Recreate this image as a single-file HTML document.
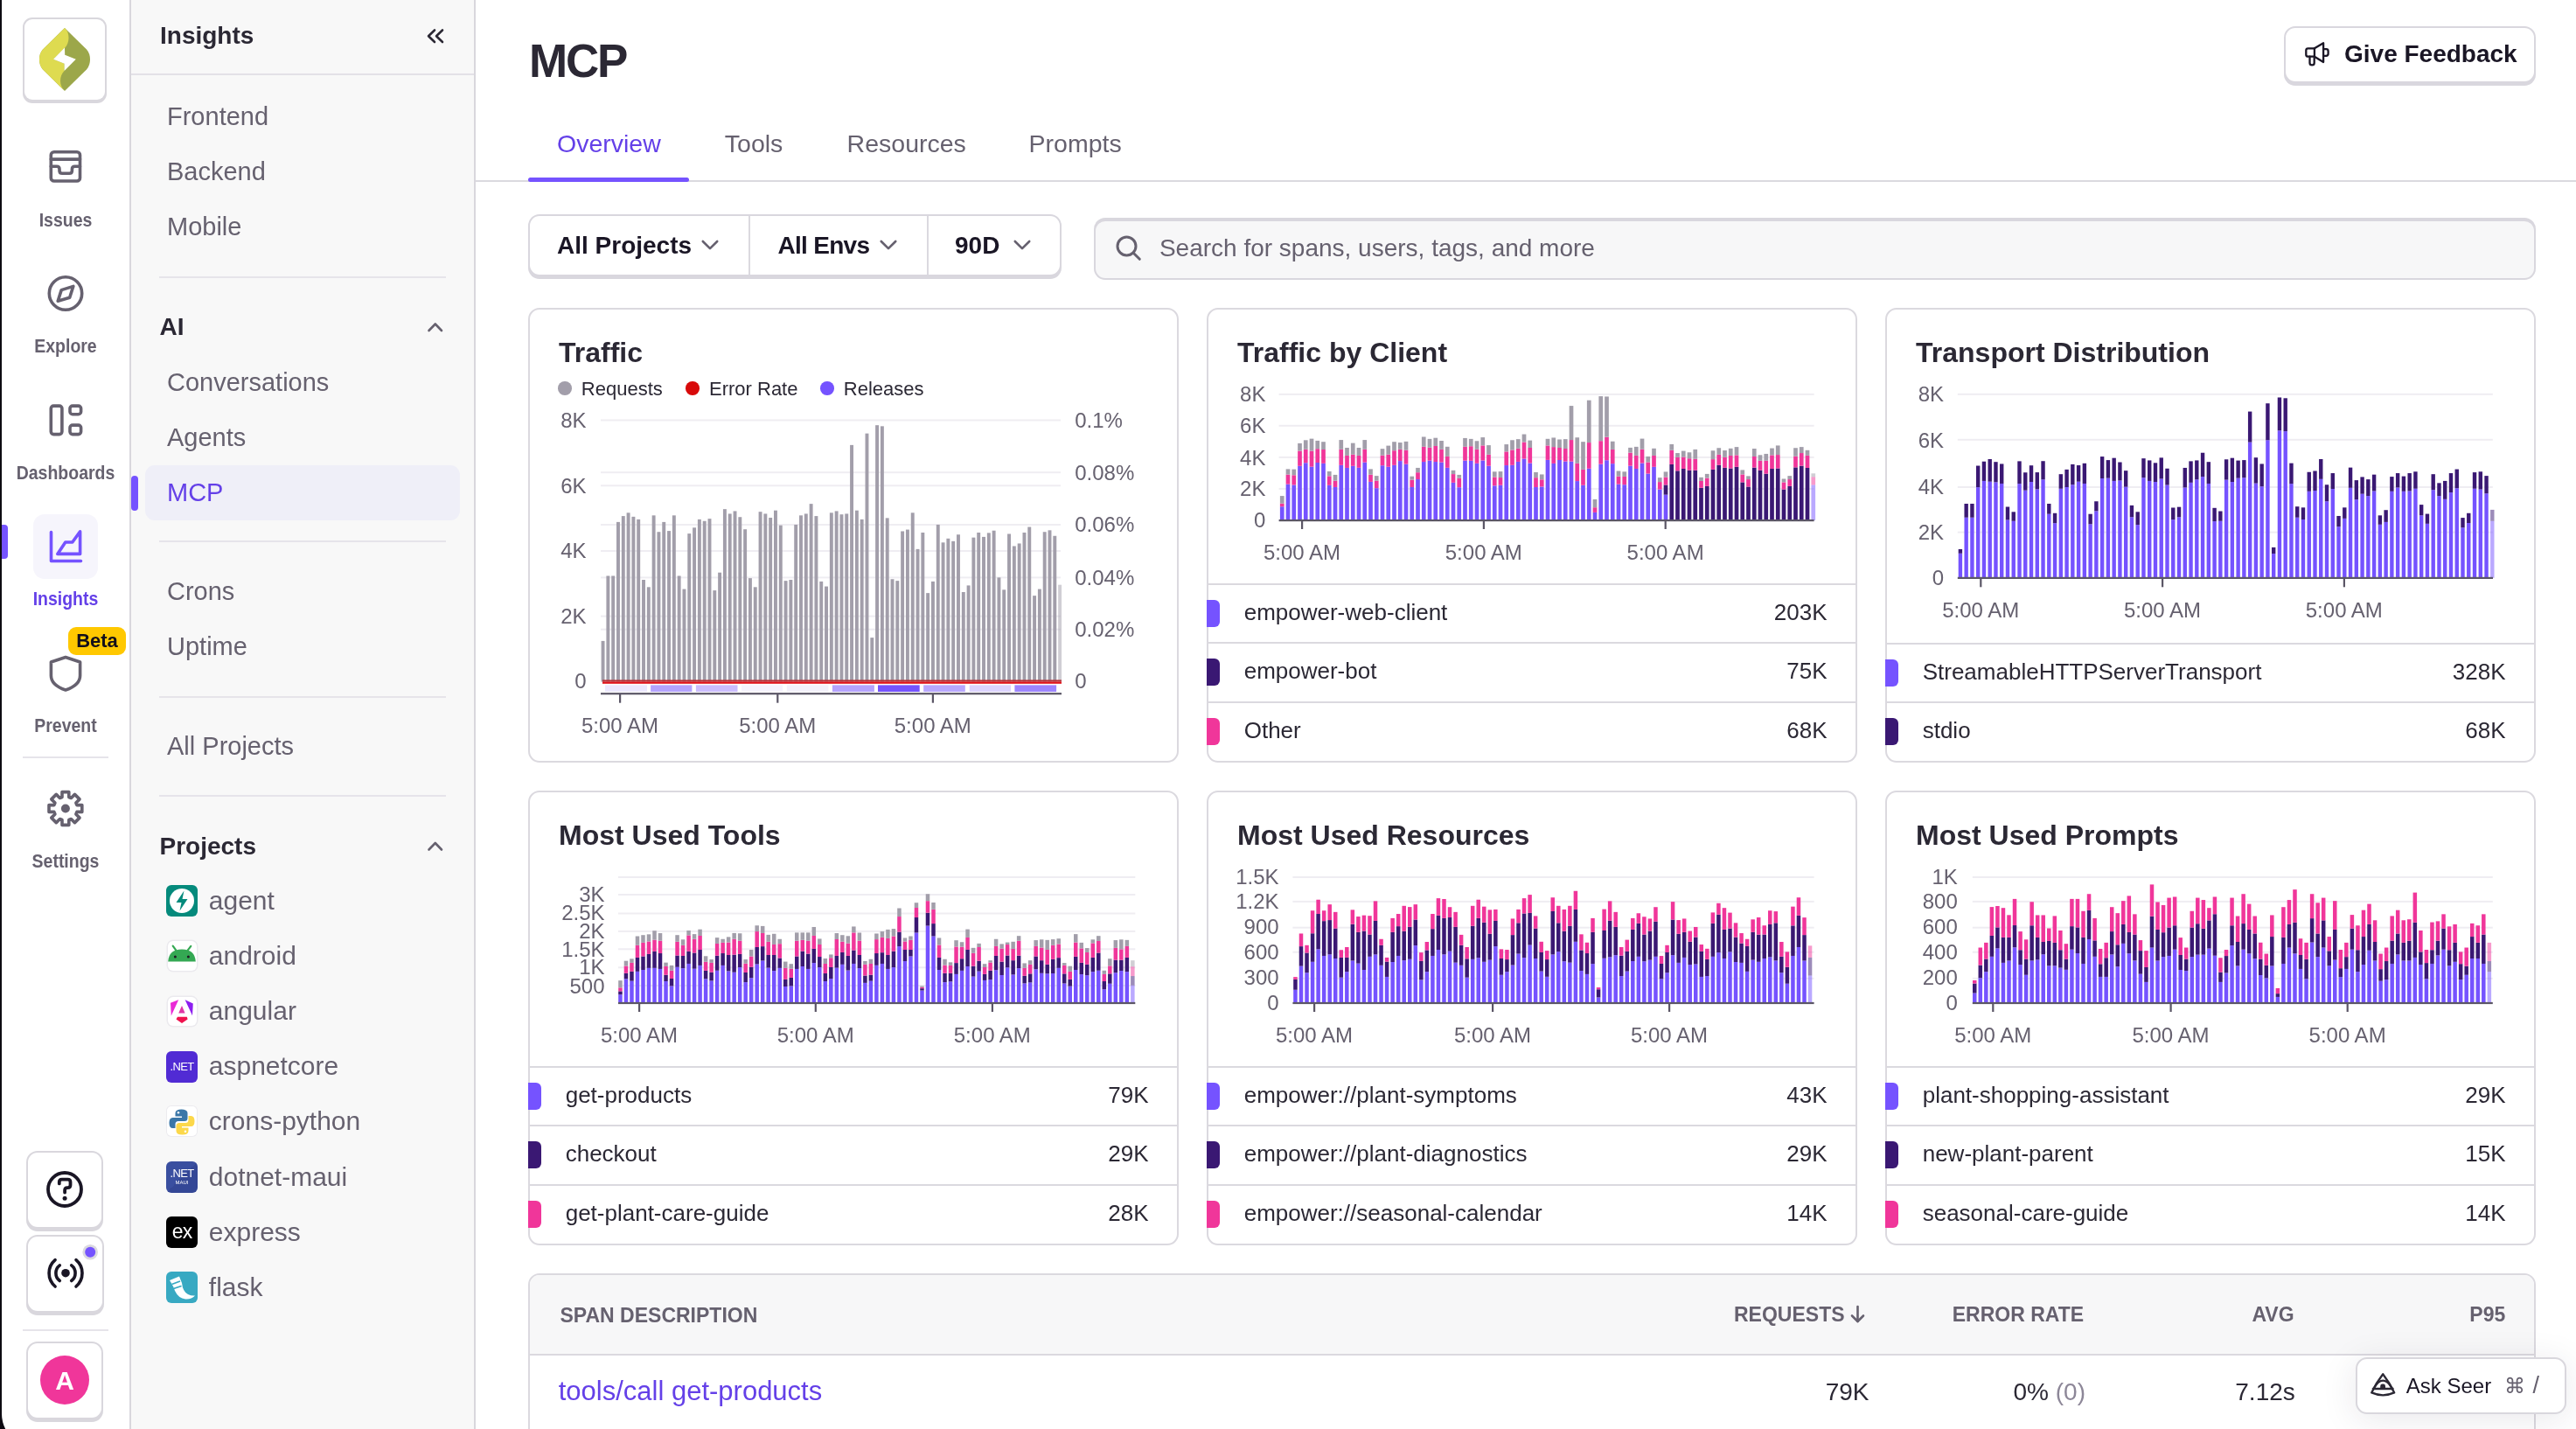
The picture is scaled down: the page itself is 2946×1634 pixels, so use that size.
<!DOCTYPE html>
<html><head><meta charset="utf-8"><title>MCP</title>
<style>
html,body{margin:0;padding:0;width:2946px;height:1634px;overflow:hidden;background:#fff}
body{position:relative;font-family:"Liberation Sans", sans-serif;-webkit-font-smoothing:antialiased}
.t{position:absolute;white-space:nowrap;font-family:"Liberation Sans", sans-serif}
svg{display:block}
</style></head><body>
<div id="root" style="position:absolute;left:0;top:0;width:2946px;height:1634px;overflow:hidden;will-change:transform;background:#fff"><div style="position:absolute;left:0.0px;top:0.0px;width:2946.0px;height:1634.0px;background:#fff"></div><div style="position:absolute;left:2.0px;top:0.0px;width:146.0px;height:1634.0px;background:#fff"></div><div style="position:absolute;left:148.0px;top:0.0px;width:2.0px;height:1634.0px;background:#d9d7dd"></div><div style="position:absolute;left:0.0px;top:0.0px;width:2.0px;height:1634.0px;background:#0d0b12"></div><div style="position:absolute;left:150.0px;top:0.0px;width:392.0px;height:1634.0px;background:#f8f8f8"></div><div style="position:absolute;left:542.0px;top:0.0px;width:2.0px;height:1634.0px;background:#d9d7dd"></div><div style="position:absolute;left:26.0px;top:20.0px;width:95.5px;height:97.5px;background:#d9d7dd;border-radius:11px"></div><div style="position:absolute;left:28.0px;top:22.0px;width:91.5px;height:92.0px;background:#fff;border-radius:9px"></div><svg style="position:absolute;left:0.0px;top:0.0px;" width="150.0" height="130.0" viewBox="0 0 150 130"><path d="M74,32 L99,56.5 Q103,61 103,68 Q103,75 99,79.5 L74,104 L49,79.5 Q45,75 45,68 Q45,61 49,56.5 Z" fill="#9ca74a"/><path d="M74,32 C80,37 80,49 74,55 L61,67.7 L73.6,72.7 L73.6,81 C67.5,87 67.5,98 74,104 L49,79.5 Q45,75 45,68 Q45,61 49,56.5 Z" fill="#dedb50"/><path d="M74,54.5 L61,67.7 L73.6,72.7 L73.6,81 L86.8,67.7 L74.2,62.7 Z" fill="#fff"/></svg><svg style="position:absolute;left:0.0px;top:160.0px;" width="150.0" height="60.0" viewBox="0 160 150 60"><g fill="none" stroke="#66616f" stroke-width="3.6" stroke-linecap="round" stroke-linejoin="round"><rect x="58.3" y="173.8" width="33.2" height="33.2" rx="3.5"/><path d="M58.3,182.1 H91.5"/><path d="M58.3,190.3 H64.8 Q68,190.3 68,193.5 V195.2 Q68,198.3 71.2,198.3 H79.2 Q82.4,198.3 82.4,195.2 V193.5 Q82.4,190.3 85.6,190.3 H91.5"/></g></svg><svg style="position:absolute;left:0.0px;top:300.0px;" width="150.0" height="70.0" viewBox="0 300 150 70"><g fill="none" stroke="#66616f" stroke-width="3.6" stroke-linecap="round" stroke-linejoin="round"><circle cx="75" cy="335.5" r="18.7"/><path d="M83.8,327.4 L79.7,340.2 L66.2,344.2 L70.2,331.6 Z"/></g></svg><svg style="position:absolute;left:0.0px;top:450.0px;" width="150.0" height="60.0" viewBox="0 450 150 60"><g fill="none" stroke="#66616f" stroke-width="3.6" stroke-linecap="round" stroke-linejoin="round"><rect x="58.3" y="464.1" width="12.6" height="32.5" rx="3"/><rect x="80" y="464.1" width="12.6" height="9.6" rx="3"/><rect x="80" y="486.1" width="12.6" height="10.5" rx="3"/></g></svg><div style="position:absolute;left:38.0px;top:588.0px;width:74.0px;height:74.0px;background:#f6f5fc;border-radius:13px"></div><div style="position:absolute;left:2.0px;top:600.0px;width:7.0px;height:39.0px;background:#7553ff;border-radius:0 4px 4px 0"></div><svg style="position:absolute;left:0.0px;top:595.0px;" width="150.0" height="60.0" viewBox="0 595 150 60"><g fill="none" stroke="#7553ff" stroke-width="3.6" stroke-linecap="round" stroke-linejoin="round"><path d="M58.5,608.5 V641.5 H92.5"/><path d="M65.8,633.4 L74.8,620 H82.8 L91.6,607.8 V633.4 Z"/></g></svg><svg style="position:absolute;left:0.0px;top:740.0px;" width="150.0" height="60.0" viewBox="0 740 150 60"><g fill="none" stroke="#66616f" stroke-width="3.6" stroke-linecap="round" stroke-linejoin="round"><path d="M75,751.5 L91.6,757 V772.5 Q91.6,783.5 75,789 Q58.4,783.5 58.4,772.5 V757 Z"/></g></svg><div style="position:absolute;left:78.0px;top:716.5px;width:66.0px;height:32.5px;background:#ffc800;border-radius:9px"></div><svg style="position:absolute;left:0.0px;top:895.0px;" width="150.0" height="60.0" viewBox="0 895 150 60"><g fill="none" stroke="#66616f" stroke-width="3.6" stroke-linecap="round" stroke-linejoin="round"><path d="M71.00,911.47 L71.00,905.60 L78.80,905.60 L78.80,911.47 L81.36,912.53 L85.51,908.38 L91.02,913.89 L86.87,918.04 L87.93,920.60 L93.80,920.60 L93.80,928.40 L87.93,928.40 L86.87,930.96 L91.02,935.11 L85.51,940.62 L81.36,936.47 L78.80,937.53 L78.80,943.40 L71.00,943.40 L71.00,937.53 L68.44,936.47 L64.29,940.62 L58.78,935.11 L62.93,930.96 L61.87,928.40 L56.00,928.40 L56.00,920.60 L61.87,920.60 L62.93,918.04 L58.78,913.89 L64.29,908.38 L68.44,912.53 Z"/></g><circle cx="74.9" cy="924.5" r="5" fill="#66616f"/></svg><div style="position:absolute;left:26.0px;top:865.0px;width:98.0px;height:2.0px;background:#e6e4ea"></div><div style="position:absolute;left:26.0px;top:1520.0px;width:98.0px;height:2.0px;background:#e6e4ea"></div><div class="t" style="left:-525.0px;width:1200px;text-align:center;top:240.6px;font-size:22px;line-height:22px;font-weight:700;color:#66616f;transform:scaleX(0.885);">Issues</div><div class="t" style="left:-525.0px;width:1200px;text-align:center;top:385.4px;font-size:22px;line-height:22px;font-weight:700;color:#66616f;transform:scaleX(0.885);">Explore</div><div class="t" style="left:-525.0px;width:1200px;text-align:center;top:530.4px;font-size:22px;line-height:22px;font-weight:700;color:#66616f;transform:scaleX(0.885);">Dashboards</div><div class="t" style="left:-525.0px;width:1200px;text-align:center;top:674.2px;font-size:22px;line-height:22px;font-weight:700;color:#6440e8;transform:scaleX(0.885);">Insights</div><div class="t" style="left:-525.0px;width:1200px;text-align:center;top:818.6px;font-size:22px;line-height:22px;font-weight:700;color:#66616f;transform:scaleX(0.885);">Prevent</div><div class="t" style="left:-525.0px;width:1200px;text-align:center;top:974.4px;font-size:22px;line-height:22px;font-weight:700;color:#66616f;transform:scaleX(0.885);">Settings</div><div class="t" style="left:-489.0px;width:1200px;text-align:center;top:722.4px;font-size:22px;line-height:22px;font-weight:700;color:#130f1a;">Beta</div><div style="position:absolute;left:30.0px;top:1316.0px;width:88.0px;height:92.0px;background:#d9d7dd;border-radius:13px"></div><div style="position:absolute;left:32.0px;top:1318.0px;width:84.0px;height:85.0px;background:#fff;border-radius:11px"></div><svg style="position:absolute;left:0.0px;top:1330.0px;" width="150.0" height="60.0" viewBox="0 1330 150 60"><g fill="none" stroke="#1a1625" stroke-width="3.8" stroke-linecap="round"><circle cx="74" cy="1360" r="19"/><path d="M67.8,1353.4 V1351.6 Q67.8,1348.6 70.8,1348.6 H77.5 Q80.5,1348.6 80.5,1351.6 V1355 Q80.5,1358.1 77.4,1358.1 H76.9 Q74.1,1358.1 74.1,1360.9 V1363.5"/></g><circle cx="74.1" cy="1370.3" r="2.5" fill="#1a1625"/></svg><div style="position:absolute;left:30.0px;top:1412.0px;width:89.0px;height:92.0px;background:#d9d7dd;border-radius:13px"></div><div style="position:absolute;left:32.0px;top:1414.0px;width:85.0px;height:85.0px;background:#fff;border-radius:11px"></div><svg style="position:absolute;left:0.0px;top:1420.0px;" width="150.0" height="65.0" viewBox="0 1420 150 65"><g fill="none" stroke="#1a1625" stroke-width="3.6" stroke-linecap="round"><path d="M63.1,1440.6 A20,20 0 0 0 63.1,1471"/><path d="M87,1440.6 A20,20 0 0 1 87,1471"/><path d="M68.3,1446.9 A11,11 0 0 0 68.3,1464.5"/><path d="M81.7,1446.9 A11,11 0 0 1 81.7,1464.5"/></g><circle cx="75" cy="1455.7" r="4.8" fill="#1a1625"/><circle cx="103.2" cy="1431.8" r="8.8" fill="#dad9df"/><circle cx="103.2" cy="1431.8" r="6" fill="#7553ff"/></svg><div style="position:absolute;left:30.0px;top:1534.0px;width:88.0px;height:92.0px;background:#d9d7dd;border-radius:13px"></div><div style="position:absolute;left:32.0px;top:1536.0px;width:84.0px;height:85.0px;background:#fff;border-radius:11px"></div><div style="position:absolute;left:46.0px;top:1550.0px;width:56.0px;height:56.0px;background:#f0369a;border-radius:50%"></div><div class="t" style="left:-526.0px;width:1200px;text-align:center;top:1564.2px;font-size:30px;line-height:30px;font-weight:700;color:#fff;">A</div><svg style="position:absolute;left:0.0px;top:1610.0px;" width="12.0" height="24.0" viewBox="0 1610 12 24"><path d="M0,1610 H2 V1617 A38,38 0 0 0 6.2,1634 H0 Z" fill="#0d0b12"/></svg><div class="t" style="left:183.0px;top:26.7px;font-size:28px;line-height:28px;font-weight:700;color:#2b2834;">Insights</div><svg style="position:absolute;left:480.0px;top:25.0px;" width="40.0" height="35.0" viewBox="480 25 40 35"><g fill="none" stroke="#2b2834" stroke-width="2.6" stroke-linecap="round" stroke-linejoin="round"><path d="M497,34.5 L490,41.2 L497,48"/><path d="M506,34.5 L499,41.2 L506,48"/></g></svg><div style="position:absolute;left:150.0px;top:84.0px;width:392.0px;height:2.0px;background:#e3e1e7"></div><div class="t" style="left:191.0px;top:118.9px;font-size:29px;line-height:29px;font-weight:400;color:#66616f;">Frontend</div><div class="t" style="left:191.0px;top:181.9px;font-size:29px;line-height:29px;font-weight:400;color:#66616f;">Backend</div><div class="t" style="left:191.0px;top:244.9px;font-size:29px;line-height:29px;font-weight:400;color:#66616f;">Mobile</div><div style="position:absolute;left:182.0px;top:316.0px;width:328.0px;height:2.0px;background:#e6e4ea"></div><div class="t" style="left:182.5px;top:360.3px;font-size:28px;line-height:28px;font-weight:700;color:#2b2834;">AI</div><svg style="position:absolute;left:480.0px;top:355.0px;" width="40.0" height="35.0" viewBox="480 355 40 35"><path fill="none" stroke="#66616f" stroke-width="2.6" stroke-linecap="round" stroke-linejoin="round" d="M490.5,378 L497.8,370.5 L505,378"/></svg><div style="position:absolute;left:166.0px;top:532.0px;width:360.0px;height:63.0px;background:#efeff8;border-radius:11px"></div><div style="position:absolute;left:150.0px;top:544.0px;width:8.0px;height:40.0px;background:#7553ff;border-radius:4px"></div><div class="t" style="left:191.0px;top:422.8px;font-size:29px;line-height:29px;font-weight:400;color:#66616f;">Conversations</div><div class="t" style="left:191.0px;top:486.0px;font-size:29px;line-height:29px;font-weight:400;color:#66616f;">Agents</div><div class="t" style="left:191.0px;top:548.5px;font-size:29px;line-height:29px;font-weight:400;color:#6440e8;">MCP</div><div style="position:absolute;left:182.0px;top:618.0px;width:328.0px;height:2.0px;background:#e6e4ea"></div><div class="t" style="left:191.0px;top:662.3px;font-size:29px;line-height:29px;font-weight:400;color:#66616f;">Crons</div><div class="t" style="left:191.0px;top:725.2px;font-size:29px;line-height:29px;font-weight:400;color:#66616f;">Uptime</div><div style="position:absolute;left:182.0px;top:796.0px;width:328.0px;height:2.0px;background:#e6e4ea"></div><div class="t" style="left:191.0px;top:838.5px;font-size:29px;line-height:29px;font-weight:400;color:#66616f;">All Projects</div><div style="position:absolute;left:182.0px;top:909.0px;width:328.0px;height:2.0px;background:#e6e4ea"></div><div class="t" style="left:182.5px;top:953.6px;font-size:28px;line-height:28px;font-weight:700;color:#2b2834;">Projects</div><svg style="position:absolute;left:480.0px;top:950.0px;" width="40.0" height="35.0" viewBox="480 950 40 35"><path fill="none" stroke="#66616f" stroke-width="2.6" stroke-linecap="round" stroke-linejoin="round" d="M490.5,971.5 L497.8,964 L505,971.5"/></svg><div class="t" style="left:238.8px;top:1014.6px;font-size:30px;line-height:30px;font-weight:400;color:#66616f;">agent</div><div style="position:absolute;left:190.0px;top:1012.0px;width:36.0px;height:36.0px;background:#058a7c;border-radius:6px"></div><svg style="position:absolute;left:190.0px;top:1012.0px;" width="36.0" height="36.0" viewBox="0 0 36 36"><circle cx="18" cy="18" r="14" fill="#fff"/><path d="M20.5,6.5 L11.5,20 H17.5 L15.5,29.5 L24.5,16 H18.5 Z" fill="#058a7c"/></svg><div class="t" style="left:238.8px;top:1077.8px;font-size:30px;line-height:30px;font-weight:400;color:#66616f;">android</div><div style="position:absolute;left:191.5px;top:1076.2px;width:33.0px;height:33.5px;background:#fff;border-radius:6px;box-shadow:0 0 0 1.5px #ebeaee"></div><svg style="position:absolute;left:190.0px;top:1075.2px;" width="36.0" height="36.0" viewBox="0 0 36 36"><path d="M2.2,24.4 Q3,10.6 18,10.4 Q33,10.6 33.8,24.4 Z" fill="#34a853"/><path d="M7.7,6.7 L11.5,11.9 M28.3,6.9 L24.5,11.9" stroke="#34a853" stroke-width="2.2" stroke-linecap="round"/><circle cx="10.4" cy="19" r="1.5" fill="#1d1a22"/><circle cx="25.4" cy="19" r="1.5" fill="#1d1a22"/></svg><div class="t" style="left:238.8px;top:1141.0px;font-size:30px;line-height:30px;font-weight:400;color:#66616f;">angular</div><div style="position:absolute;left:191.5px;top:1139.9px;width:33.0px;height:33.5px;background:#fff;border-radius:6px;box-shadow:0 0 0 1.5px #ebeaee"></div><svg style="position:absolute;left:190.0px;top:1138.4px;" width="36.0" height="36.0" viewBox="0 0 36 36"><path d="M5,8.7 L14.2,5.2 L5.8,23.6 Z" fill="#ea2ad6"/><path d="M21.6,5.2 L30.8,9.4 L30,23.2 Z" fill="#8d1ff0"/><path d="M18,12 L14.2,20.5 H21.6 Z" fill="#df37a6"/><path d="M11.5,27.4 L13,24.7 H23.8 L24.6,27.6 L18,32 Z" fill="#f0124e"/></svg><div class="t" style="left:238.8px;top:1204.2px;font-size:30px;line-height:30px;font-weight:400;color:#66616f;">aspnetcore</div><div style="position:absolute;left:190.0px;top:1201.6px;width:36.0px;height:36.0px;background:#512bd4;border-radius:6px"></div><div class="t" style="left:190px;top:1211.6px;width:36px;text-align:center;font-size:13px;line-height:16px;color:#fff;letter-spacing:-0.6px">.NET</div><div class="t" style="left:238.8px;top:1267.4px;font-size:30px;line-height:30px;font-weight:400;color:#66616f;">crons-python</div><div style="position:absolute;left:191.0px;top:1264.8px;width:34.0px;height:34.0px;background:#fff;border-radius:5px;box-shadow:0 0 0 1px #ecebef"></div><svg style="position:absolute;left:190.0px;top:1264.8px;" width="36.0" height="36.0" viewBox="0 0 36 36"><path d="M17.5,3.5 Q10.5,3.5 10.5,8 V11.5 H18 V13 H7.5 Q3.5,13 3.5,19 Q3.5,25 7.5,25 H10.5 V20.5 Q10.5,17 14,17 H21 Q24.5,17 24.5,13.5 V8 Q24.5,3.5 17.5,3.5 Z" fill="#3b77a8"/><path d="M18.5,32.5 Q25.5,32.5 25.5,28 V24.5 H18 V23 H28.5 Q32.5,23 32.5,17 Q32.5,11 28.5,11 H25.5 V15.5 Q25.5,19 22,19 H15 Q11.5,19 11.5,22.5 V28 Q11.5,32.5 18.5,32.5 Z" fill="#fcd84a"/><circle cx="14" cy="7.3" r="1.3" fill="#fff"/><circle cx="22" cy="28.7" r="1.3" fill="#fff"/></svg><div class="t" style="left:238.8px;top:1330.6px;font-size:30px;line-height:30px;font-weight:400;color:#66616f;">dotnet-maui</div><div style="position:absolute;left:190.0px;top:1328.0px;width:36.0px;height:36.0px;background:linear-gradient(135deg,#3a4fa0 50%,#344796 50%);border-radius:6px"></div><div class="t" style="left:190px;top:1335.0px;width:36px;text-align:center;font-size:13px;line-height:14px;color:#fff;letter-spacing:-0.6px">.NET</div><div class="t" style="left:190px;top:1349.0px;width:36px;text-align:center;font-size:6px;line-height:7px;color:#fff">MAUI</div><div class="t" style="left:238.8px;top:1393.8px;font-size:30px;line-height:30px;font-weight:400;color:#66616f;">express</div><div style="position:absolute;left:190.0px;top:1391.2px;width:36.0px;height:36.0px;background:#000;border-radius:6px"></div><div class="t" style="left:190px;top:1396.2px;width:36px;text-align:center;font-size:23px;line-height:24px;color:#fff;font-weight:300;letter-spacing:-1px">ex</div><div class="t" style="left:238.8px;top:1457.0px;font-size:30px;line-height:30px;font-weight:400;color:#66616f;">flask</div><div style="position:absolute;left:190.0px;top:1454.4px;width:36.0px;height:36.0px;background:#38a9c2;border-radius:6px"></div><svg style="position:absolute;left:190.0px;top:1454.4px;" width="36.0" height="36.0" viewBox="0 0 36 36"><path d="M4,10 L15,5.5 L18,13 Q19,23 25,26 Q29,28 33,27.5 Q29,32 22,31.5 Q14,30.5 10,22 Q8.5,17 4,10 Z" fill="#fff"/><path d="M6.5,14.5 L16,11 M8.5,19.5 L17.5,16.5" stroke="#38a9c2" stroke-width="1.8"/></svg><div class="t" style="left:605.0px;top:43.3px;font-size:53px;line-height:53px;font-weight:700;color:#2b2834;letter-spacing:-2.2px;">MCP</div><div style="position:absolute;left:2612.0px;top:30.0px;width:288.0px;height:68.0px;background:#d9d7de;border-radius:13px"></div><div style="position:absolute;left:2614.0px;top:32.0px;width:284.0px;height:60.5px;background:#fff;border-radius:11px"></div><svg style="position:absolute;left:2630.0px;top:40.0px;" width="40.0" height="45.0" viewBox="2630 40 40 45"><g fill="none" stroke="#1a1625" stroke-width="2.3" stroke-linejoin="round" stroke-linecap="round"><path d="M2637.3,57.6 Q2637.3,55.3 2639.6,55.3 H2646.9 L2657.1,49.3 V71 L2646.9,64.7 H2639.6 Q2637.3,64.7 2637.3,62.4 Z"/><path d="M2646.9,55.3 V64.7"/><path d="M2657.1,56.2 H2660.3 Q2662.6,56.2 2662.6,58.5 V61.6 Q2662.6,63.9 2660.3,63.9 H2657.1"/><path d="M2641.5,64.7 V71.9 Q2641.5,74.3 2644.1,74.3 Q2646.7,74.3 2646.7,71.9 V64.7"/></g></svg><div class="t" style="left:2681.0px;top:48.3px;font-size:28px;line-height:28px;font-weight:700;color:#1a1625;">Give Feedback</div><div class="t" style="left:637.0px;top:150.4px;font-size:28.5px;line-height:28.5px;font-weight:400;color:#6440e8;">Overview</div><div class="t" style="left:828.8px;top:150.4px;font-size:28.5px;line-height:28.5px;font-weight:400;color:#66616f;">Tools</div><div class="t" style="left:968.6px;top:150.4px;font-size:28.5px;line-height:28.5px;font-weight:400;color:#66616f;">Resources</div><div class="t" style="left:1176.6px;top:150.4px;font-size:28.5px;line-height:28.5px;font-weight:400;color:#66616f;">Prompts</div><div style="position:absolute;left:544.0px;top:205.5px;width:2402.0px;height:2.0px;background:#dbd9df"></div><div style="position:absolute;left:603.7px;top:203.2px;width:184.7px;height:4.4px;background:#7553ff;border-radius:3px"></div><div style="position:absolute;left:604.3px;top:244.7px;width:609.7px;height:74.8px;background:#d9d7de;border-radius:13px"></div><div style="position:absolute;left:606.3px;top:246.7px;width:605.7px;height:67.8px;background:#fff;border-radius:11px"></div><div style="position:absolute;left:855.8px;top:246.7px;width:2.0px;height:67.8px;background:#dbd9df"></div><div style="position:absolute;left:1059.8px;top:246.7px;width:2.0px;height:67.8px;background:#dbd9df"></div><div class="t" style="left:637.0px;top:266.7px;font-size:28px;line-height:28px;font-weight:700;color:#1a1625;">All Projects</div><svg style="position:absolute;left:799.8px;top:268.0px;" width="24.0" height="24.0" viewBox="799.8 268 24 24"><path fill="none" stroke="#66616f" stroke-width="2.6" stroke-linecap="round" stroke-linejoin="round" d="M803.5999999999999,276 L811.8,284.2 L820.0,276"/></svg><div class="t" style="left:889.4px;top:266.7px;font-size:28px;line-height:28px;font-weight:700;color:#1a1625;letter-spacing:-0.7px;">All Envs</div><svg style="position:absolute;left:1004.0px;top:268.0px;" width="24.0" height="24.0" viewBox="1004 268 24 24"><path fill="none" stroke="#66616f" stroke-width="2.6" stroke-linecap="round" stroke-linejoin="round" d="M1007.8,276 L1016,284.2 L1024.2,276"/></svg><div class="t" style="left:1092.0px;top:266.7px;font-size:28px;line-height:28px;font-weight:700;color:#1a1625;">90D</div><svg style="position:absolute;left:1156.8px;top:268.0px;" width="24.0" height="24.0" viewBox="1156.8 268 24 24"><path fill="none" stroke="#66616f" stroke-width="2.6" stroke-linecap="round" stroke-linejoin="round" d="M1160.6,276 L1168.8,284.2 L1177.0,276"/></svg><div style="position:absolute;left:1251.0px;top:248.5px;width:1649.0px;height:71.1px;background:#d9d7de;border-radius:13px"></div><div style="position:absolute;left:1253.0px;top:252.5px;width:1645.0px;height:65.1px;background:#f7f7f8;border-radius:11px"></div><svg style="position:absolute;left:1270.0px;top:262.0px;" width="40.0" height="40.0" viewBox="1270 262 40 40"><g fill="none" stroke="#66616f" stroke-width="3" stroke-linecap="round"><circle cx="1288.5" cy="281.5" r="10.5"/><path d="M1296.2,289.2 L1303.3,296.3"/></g></svg><div class="t" style="left:1325.9px;top:270.3px;font-size:28px;line-height:28px;font-weight:400;color:#66616f;">Search for spans, users, tags, and more</div><div style="position:absolute;left:604.0px;top:352.0px;width:744.0px;height:520.0px;border:2px solid #dbd9df;border-radius:13px;box-sizing:border-box;background:#fff"></div><div class="t" style="left:639.0px;top:387.4px;font-size:32px;line-height:32px;font-weight:700;color:#2b2834;">Traffic</div><div style="position:absolute;left:1380.0px;top:352.0px;width:744.0px;height:520.0px;border:2px solid #dbd9df;border-radius:13px;box-sizing:border-box;background:#fff"></div><div class="t" style="left:1415.0px;top:387.4px;font-size:32px;line-height:32px;font-weight:700;color:#2b2834;">Traffic by Client</div><div style="position:absolute;left:1380.0px;top:666.5px;width:744.0px;height:2.0px;background:#dbd9df"></div><div style="position:absolute;left:1380.0px;top:685.5px;width:15.0px;height:31.0px;background:#7553ff;border-radius:0 6px 6px 0"></div><div class="t" style="left:1422.7px;top:686.8px;font-size:26px;line-height:26px;font-weight:400;color:#2b2834;">empower-web-client</div><div class="t" style="left:889.5px;width:1200px;text-align:right;top:686.8px;font-size:26px;line-height:26px;font-weight:400;color:#2b2834;">203K</div><div style="position:absolute;left:1380.0px;top:734.0px;width:744.0px;height:2.0px;background:#dbd9df"></div><div style="position:absolute;left:1380.0px;top:753.0px;width:15.0px;height:31.0px;background:#3a1873;border-radius:0 6px 6px 0"></div><div class="t" style="left:1422.7px;top:754.3px;font-size:26px;line-height:26px;font-weight:400;color:#2b2834;">empower-bot</div><div class="t" style="left:889.5px;width:1200px;text-align:right;top:754.3px;font-size:26px;line-height:26px;font-weight:400;color:#2b2834;">75K</div><div style="position:absolute;left:1380.0px;top:801.5px;width:744.0px;height:2.0px;background:#dbd9df"></div><div style="position:absolute;left:1380.0px;top:820.5px;width:15.0px;height:31.0px;background:#f0369a;border-radius:0 6px 6px 0"></div><div class="t" style="left:1422.7px;top:821.8px;font-size:26px;line-height:26px;font-weight:400;color:#2b2834;">Other</div><div class="t" style="left:889.5px;width:1200px;text-align:right;top:821.8px;font-size:26px;line-height:26px;font-weight:400;color:#2b2834;">68K</div><div style="position:absolute;left:2156.0px;top:352.0px;width:744.0px;height:520.0px;border:2px solid #dbd9df;border-radius:13px;box-sizing:border-box;background:#fff"></div><div class="t" style="left:2191.0px;top:387.4px;font-size:32px;line-height:32px;font-weight:700;color:#2b2834;">Transport Distribution</div><div style="position:absolute;left:2156.0px;top:734.5px;width:744.0px;height:2.0px;background:#dbd9df"></div><div style="position:absolute;left:2156.0px;top:753.5px;width:15.0px;height:31.0px;background:#7553ff;border-radius:0 6px 6px 0"></div><div class="t" style="left:2198.7px;top:754.8px;font-size:26px;line-height:26px;font-weight:400;color:#2b2834;">StreamableHTTPServerTransport</div><div class="t" style="left:1665.5px;width:1200px;text-align:right;top:754.8px;font-size:26px;line-height:26px;font-weight:400;color:#2b2834;">328K</div><div style="position:absolute;left:2156.0px;top:802.0px;width:744.0px;height:2.0px;background:#dbd9df"></div><div style="position:absolute;left:2156.0px;top:821.0px;width:15.0px;height:31.0px;background:#3a1873;border-radius:0 6px 6px 0"></div><div class="t" style="left:2198.7px;top:822.3px;font-size:26px;line-height:26px;font-weight:400;color:#2b2834;">stdio</div><div class="t" style="left:1665.5px;width:1200px;text-align:right;top:822.3px;font-size:26px;line-height:26px;font-weight:400;color:#2b2834;">68K</div><div style="position:absolute;left:604.0px;top:904.0px;width:744.0px;height:520.0px;border:2px solid #dbd9df;border-radius:13px;box-sizing:border-box;background:#fff"></div><div class="t" style="left:639.0px;top:939.4px;font-size:32px;line-height:32px;font-weight:700;color:#2b2834;">Most Used Tools</div><div style="position:absolute;left:604.0px;top:1218.5px;width:744.0px;height:2.0px;background:#dbd9df"></div><div style="position:absolute;left:604.0px;top:1237.5px;width:15.0px;height:31.0px;background:#7553ff;border-radius:0 6px 6px 0"></div><div class="t" style="left:646.7px;top:1238.8px;font-size:26px;line-height:26px;font-weight:400;color:#2b2834;">get-products</div><div class="t" style="left:113.5px;width:1200px;text-align:right;top:1238.8px;font-size:26px;line-height:26px;font-weight:400;color:#2b2834;">79K</div><div style="position:absolute;left:604.0px;top:1286.0px;width:744.0px;height:2.0px;background:#dbd9df"></div><div style="position:absolute;left:604.0px;top:1305.0px;width:15.0px;height:31.0px;background:#3a1873;border-radius:0 6px 6px 0"></div><div class="t" style="left:646.7px;top:1306.3px;font-size:26px;line-height:26px;font-weight:400;color:#2b2834;">checkout</div><div class="t" style="left:113.5px;width:1200px;text-align:right;top:1306.3px;font-size:26px;line-height:26px;font-weight:400;color:#2b2834;">29K</div><div style="position:absolute;left:604.0px;top:1353.5px;width:744.0px;height:2.0px;background:#dbd9df"></div><div style="position:absolute;left:604.0px;top:1372.5px;width:15.0px;height:31.0px;background:#f0369a;border-radius:0 6px 6px 0"></div><div class="t" style="left:646.7px;top:1373.8px;font-size:26px;line-height:26px;font-weight:400;color:#2b2834;">get-plant-care-guide</div><div class="t" style="left:113.5px;width:1200px;text-align:right;top:1373.8px;font-size:26px;line-height:26px;font-weight:400;color:#2b2834;">28K</div><div style="position:absolute;left:1380.0px;top:904.0px;width:744.0px;height:520.0px;border:2px solid #dbd9df;border-radius:13px;box-sizing:border-box;background:#fff"></div><div class="t" style="left:1415.0px;top:939.4px;font-size:32px;line-height:32px;font-weight:700;color:#2b2834;">Most Used Resources</div><div style="position:absolute;left:1380.0px;top:1218.5px;width:744.0px;height:2.0px;background:#dbd9df"></div><div style="position:absolute;left:1380.0px;top:1237.5px;width:15.0px;height:31.0px;background:#7553ff;border-radius:0 6px 6px 0"></div><div class="t" style="left:1422.7px;top:1238.8px;font-size:26px;line-height:26px;font-weight:400;color:#2b2834;">empower://plant-symptoms</div><div class="t" style="left:889.5px;width:1200px;text-align:right;top:1238.8px;font-size:26px;line-height:26px;font-weight:400;color:#2b2834;">43K</div><div style="position:absolute;left:1380.0px;top:1286.0px;width:744.0px;height:2.0px;background:#dbd9df"></div><div style="position:absolute;left:1380.0px;top:1305.0px;width:15.0px;height:31.0px;background:#3a1873;border-radius:0 6px 6px 0"></div><div class="t" style="left:1422.7px;top:1306.3px;font-size:26px;line-height:26px;font-weight:400;color:#2b2834;">empower://plant-diagnostics</div><div class="t" style="left:889.5px;width:1200px;text-align:right;top:1306.3px;font-size:26px;line-height:26px;font-weight:400;color:#2b2834;">29K</div><div style="position:absolute;left:1380.0px;top:1353.5px;width:744.0px;height:2.0px;background:#dbd9df"></div><div style="position:absolute;left:1380.0px;top:1372.5px;width:15.0px;height:31.0px;background:#f0369a;border-radius:0 6px 6px 0"></div><div class="t" style="left:1422.7px;top:1373.8px;font-size:26px;line-height:26px;font-weight:400;color:#2b2834;">empower://seasonal-calendar</div><div class="t" style="left:889.5px;width:1200px;text-align:right;top:1373.8px;font-size:26px;line-height:26px;font-weight:400;color:#2b2834;">14K</div><div style="position:absolute;left:2156.0px;top:904.0px;width:744.0px;height:520.0px;border:2px solid #dbd9df;border-radius:13px;box-sizing:border-box;background:#fff"></div><div class="t" style="left:2191.0px;top:939.4px;font-size:32px;line-height:32px;font-weight:700;color:#2b2834;">Most Used Prompts</div><div style="position:absolute;left:2156.0px;top:1218.5px;width:744.0px;height:2.0px;background:#dbd9df"></div><div style="position:absolute;left:2156.0px;top:1237.5px;width:15.0px;height:31.0px;background:#7553ff;border-radius:0 6px 6px 0"></div><div class="t" style="left:2198.7px;top:1238.8px;font-size:26px;line-height:26px;font-weight:400;color:#2b2834;">plant-shopping-assistant</div><div class="t" style="left:1665.5px;width:1200px;text-align:right;top:1238.8px;font-size:26px;line-height:26px;font-weight:400;color:#2b2834;">29K</div><div style="position:absolute;left:2156.0px;top:1286.0px;width:744.0px;height:2.0px;background:#dbd9df"></div><div style="position:absolute;left:2156.0px;top:1305.0px;width:15.0px;height:31.0px;background:#3a1873;border-radius:0 6px 6px 0"></div><div class="t" style="left:2198.7px;top:1306.3px;font-size:26px;line-height:26px;font-weight:400;color:#2b2834;">new-plant-parent</div><div class="t" style="left:1665.5px;width:1200px;text-align:right;top:1306.3px;font-size:26px;line-height:26px;font-weight:400;color:#2b2834;">15K</div><div style="position:absolute;left:2156.0px;top:1353.5px;width:744.0px;height:2.0px;background:#dbd9df"></div><div style="position:absolute;left:2156.0px;top:1372.5px;width:15.0px;height:31.0px;background:#f0369a;border-radius:0 6px 6px 0"></div><div class="t" style="left:2198.7px;top:1373.8px;font-size:26px;line-height:26px;font-weight:400;color:#2b2834;">seasonal-care-guide</div><div class="t" style="left:1665.5px;width:1200px;text-align:right;top:1373.8px;font-size:26px;line-height:26px;font-weight:400;color:#2b2834;">14K</div><div style="position:absolute;left:604.0px;top:1456.0px;width:2296.0px;height:244.0px;border:2px solid #dbd9df;border-radius:13px;box-sizing:border-box;background:#fff"></div><div style="position:absolute;left:606.0px;top:1458.0px;width:2292.0px;height:90.0px;background:#f7f7f8;border-radius:11px 11px 0 0"></div><div style="position:absolute;left:606.0px;top:1548.0px;width:2292.0px;height:2.0px;background:#dbd9df"></div><div class="t" style="left:640.5px;top:1492.5px;font-size:23px;line-height:23px;font-weight:700;color:#66616f;">SPAN DESCRIPTION</div><div class="t" style="left:1983.0px;top:1492.0px;font-size:23px;line-height:23px;font-weight:700;color:#66616f;">REQUESTS</div><svg style="position:absolute;left:2110.0px;top:1488.0px;" width="30.0" height="30.0" viewBox="2110 1488 30 30"><g fill="none" stroke="#66616f" stroke-width="2.6" stroke-linecap="round" stroke-linejoin="round"><path d="M2124.5,1494 V1511"/><path d="M2118,1504.5 L2124.5,1511 L2131,1504.5"/></g></svg><div class="t" style="left:1183.1px;width:1200px;text-align:right;top:1492.0px;font-size:23px;line-height:23px;font-weight:700;color:#66616f;">ERROR RATE</div><div class="t" style="left:1423.6px;width:1200px;text-align:right;top:1492.0px;font-size:23px;line-height:23px;font-weight:700;color:#66616f;">AVG</div><div class="t" style="left:1665.3px;width:1200px;text-align:right;top:1492.0px;font-size:23px;line-height:23px;font-weight:700;color:#66616f;">P95</div><div class="t" style="left:638.7px;top:1575.1px;font-size:31px;line-height:31px;font-weight:400;color:#6440e8;">tools/call get-products</div><div class="t" style="left:937.5px;width:1200px;text-align:right;top:1577.9px;font-size:28px;line-height:28px;font-weight:400;color:#2b2834;">79K</div><div class="t" style="left:1185.0px;width:1200px;text-align:right;top:1577.9px;font-size:28px;line-height:28px;font-weight:400;color:#2b2834;">0% <span style="color:#8d8798">(0)</span></div><div class="t" style="left:1424.8px;width:1200px;text-align:right;top:1577.9px;font-size:28px;line-height:28px;font-weight:400;color:#2b2834;">7.12s</div><div style="position:absolute;left:2694.0px;top:1551.7px;width:241.1px;height:65.4px;background:#fff;border:2px solid #d9d7dd;border-radius:13px;box-sizing:border-box;box-shadow:0 6px 40px rgba(40,30,60,0.10)"></div><svg style="position:absolute;left:2705.0px;top:1565.0px;" width="40.0" height="36.0" viewBox="2705 1565 40 36"><g fill="none" stroke="#2b2834" stroke-width="2.3" stroke-linejoin="round" stroke-linecap="round"><path d="M2725.2,1571.2 Q2733.2,1581.5 2738.2,1592.4 Q2725.2,1598.2 2712.2,1592.4 Q2717.2,1581.5 2725.2,1571.2 Z"/><path d="M2714.6,1587.6 Q2725.2,1569.6 2735.8,1587.6"/><path d="M2713.8,1588 H2736.6"/></g><rect x="2722.2" y="1582.6" width="5.8" height="6" rx="2.4" fill="#2b2834"/></svg><div class="t" style="left:2751.8px;top:1572.7px;font-size:24px;line-height:24px;font-weight:400;color:#1a1625;">Ask Seer</div><div class="t" style="left:2864.0px;top:1572.7px;font-size:24px;line-height:24px;font-weight:400;color:#66616f;">&#8984;</div><div class="t" style="left:2896.5px;top:1571.1px;font-size:27px;line-height:27px;font-weight:400;color:#66616f;">/</div><svg style="position:absolute;left:680.0px;top:420.0px;" width="540.0" height="390.0" viewBox="680 420 540 390"><rect x="687" y="479.50" width="526.00" height="2" fill="#efedf2"/><rect x="687" y="554.30" width="526.00" height="2" fill="#efedf2"/><rect x="687" y="629.00" width="526.00" height="2" fill="#efedf2"/><rect x="687" y="703.60" width="526.00" height="2" fill="#efedf2"/><rect x="687" y="539.20" width="526.00" height="2" fill="#efedf2"/><rect x="687" y="599.00" width="526.00" height="2" fill="#efedf2"/><rect x="687" y="659.40" width="526.00" height="2" fill="#efedf2"/><rect x="687" y="718.70" width="526.00" height="2" fill="#efedf2"/><rect x="687.60" y="732.90" width="3.92" height="46.70" fill="#a29eaa"/><rect x="693.41" y="658.47" width="3.92" height="121.13" fill="#a29eaa"/><rect x="699.21" y="658.47" width="3.92" height="121.13" fill="#a29eaa"/><rect x="705.02" y="596.89" width="3.92" height="182.71" fill="#a29eaa"/><rect x="710.82" y="590.09" width="3.92" height="189.51" fill="#a29eaa"/><rect x="716.63" y="586.32" width="3.92" height="193.28" fill="#a29eaa"/><rect x="722.44" y="590.85" width="3.92" height="188.75" fill="#a29eaa"/><rect x="728.24" y="593.87" width="3.92" height="185.73" fill="#a29eaa"/><rect x="734.05" y="663.01" width="3.92" height="116.59" fill="#a29eaa"/><rect x="739.85" y="671.32" width="3.92" height="108.28" fill="#a29eaa"/><rect x="745.66" y="589.34" width="3.92" height="190.26" fill="#a29eaa"/><rect x="751.47" y="608.23" width="3.92" height="171.37" fill="#a29eaa"/><rect x="757.27" y="596.89" width="3.92" height="182.71" fill="#a29eaa"/><rect x="763.08" y="607.09" width="3.92" height="172.51" fill="#a29eaa"/><rect x="768.88" y="589.34" width="3.92" height="190.26" fill="#a29eaa"/><rect x="774.69" y="658.47" width="3.92" height="121.13" fill="#a29eaa"/><rect x="780.50" y="673.59" width="3.92" height="106.01" fill="#a29eaa"/><rect x="786.30" y="610.12" width="3.92" height="169.48" fill="#a29eaa"/><rect x="792.11" y="603.32" width="3.92" height="176.28" fill="#a29eaa"/><rect x="797.91" y="593.87" width="3.92" height="185.73" fill="#a29eaa"/><rect x="803.72" y="595.76" width="3.92" height="183.84" fill="#a29eaa"/><rect x="809.53" y="593.12" width="3.92" height="186.48" fill="#a29eaa"/><rect x="815.33" y="675.10" width="3.92" height="104.50" fill="#a29eaa"/><rect x="821.14" y="654.70" width="3.92" height="124.90" fill="#a29eaa"/><rect x="826.94" y="582.16" width="3.92" height="197.44" fill="#a29eaa"/><rect x="832.75" y="587.45" width="3.92" height="192.15" fill="#a29eaa"/><rect x="838.56" y="584.43" width="3.92" height="195.17" fill="#a29eaa"/><rect x="844.36" y="591.23" width="3.92" height="188.37" fill="#a29eaa"/><rect x="850.17" y="605.21" width="3.92" height="174.39" fill="#a29eaa"/><rect x="855.97" y="661.12" width="3.92" height="118.48" fill="#a29eaa"/><rect x="861.78" y="671.32" width="3.92" height="108.28" fill="#a29eaa"/><rect x="867.59" y="585.18" width="3.92" height="194.42" fill="#a29eaa"/><rect x="873.39" y="587.45" width="3.92" height="192.15" fill="#a29eaa"/><rect x="879.20" y="591.98" width="3.92" height="187.62" fill="#a29eaa"/><rect x="885.00" y="583.67" width="3.92" height="195.93" fill="#a29eaa"/><rect x="890.81" y="600.67" width="3.92" height="178.93" fill="#a29eaa"/><rect x="896.62" y="664.14" width="3.92" height="115.46" fill="#a29eaa"/><rect x="902.42" y="663.01" width="3.92" height="116.59" fill="#a29eaa"/><rect x="908.23" y="599.92" width="3.92" height="179.68" fill="#a29eaa"/><rect x="914.03" y="589.34" width="3.92" height="190.26" fill="#a29eaa"/><rect x="919.84" y="587.45" width="3.92" height="192.15" fill="#a29eaa"/><rect x="925.65" y="576.12" width="3.92" height="203.48" fill="#a29eaa"/><rect x="931.45" y="590.09" width="3.92" height="189.51" fill="#a29eaa"/><rect x="937.26" y="664.90" width="3.92" height="114.70" fill="#a29eaa"/><rect x="943.06" y="670.56" width="3.92" height="109.04" fill="#a29eaa"/><rect x="948.87" y="586.32" width="3.92" height="193.28" fill="#a29eaa"/><rect x="954.68" y="584.43" width="3.92" height="195.17" fill="#a29eaa"/><rect x="960.48" y="588.21" width="3.92" height="191.39" fill="#a29eaa"/><rect x="966.29" y="587.45" width="3.92" height="192.15" fill="#a29eaa"/><rect x="972.09" y="508.87" width="3.92" height="270.73" fill="#a29eaa"/><rect x="977.90" y="583.67" width="3.92" height="195.93" fill="#a29eaa"/><rect x="983.71" y="593.87" width="3.92" height="185.73" fill="#a29eaa"/><rect x="989.51" y="495.65" width="3.92" height="283.95" fill="#a29eaa"/><rect x="995.32" y="729.12" width="3.92" height="50.48" fill="#a29eaa"/><rect x="1001.12" y="486.20" width="3.92" height="293.40" fill="#a29eaa"/><rect x="1006.93" y="487.34" width="3.92" height="292.26" fill="#a29eaa"/><rect x="1012.74" y="592.36" width="3.92" height="187.24" fill="#a29eaa"/><rect x="1018.54" y="662.25" width="3.92" height="117.35" fill="#a29eaa"/><rect x="1024.35" y="664.14" width="3.92" height="115.46" fill="#a29eaa"/><rect x="1030.15" y="607.47" width="3.92" height="172.13" fill="#a29eaa"/><rect x="1035.96" y="605.58" width="3.92" height="174.02" fill="#a29eaa"/><rect x="1041.77" y="586.32" width="3.92" height="193.28" fill="#a29eaa"/><rect x="1047.57" y="627.87" width="3.92" height="151.73" fill="#a29eaa"/><rect x="1053.38" y="608.98" width="3.92" height="170.62" fill="#a29eaa"/><rect x="1059.18" y="678.12" width="3.92" height="101.48" fill="#a29eaa"/><rect x="1064.99" y="664.90" width="3.92" height="114.70" fill="#a29eaa"/><rect x="1070.80" y="599.92" width="3.92" height="179.68" fill="#a29eaa"/><rect x="1076.60" y="620.32" width="3.92" height="159.28" fill="#a29eaa"/><rect x="1082.41" y="615.78" width="3.92" height="163.82" fill="#a29eaa"/><rect x="1088.21" y="618.81" width="3.92" height="160.79" fill="#a29eaa"/><rect x="1094.02" y="611.25" width="3.92" height="168.35" fill="#a29eaa"/><rect x="1099.83" y="676.99" width="3.92" height="102.61" fill="#a29eaa"/><rect x="1105.63" y="669.43" width="3.92" height="110.17" fill="#a29eaa"/><rect x="1111.44" y="614.65" width="3.92" height="164.95" fill="#a29eaa"/><rect x="1117.24" y="608.98" width="3.92" height="170.62" fill="#a29eaa"/><rect x="1123.05" y="613.89" width="3.92" height="165.71" fill="#a29eaa"/><rect x="1128.86" y="609.36" width="3.92" height="170.24" fill="#a29eaa"/><rect x="1134.66" y="606.72" width="3.92" height="172.88" fill="#a29eaa"/><rect x="1140.47" y="660.36" width="3.92" height="119.24" fill="#a29eaa"/><rect x="1146.27" y="674.34" width="3.92" height="105.26" fill="#a29eaa"/><rect x="1152.08" y="610.49" width="3.92" height="169.11" fill="#a29eaa"/><rect x="1157.89" y="624.47" width="3.92" height="155.13" fill="#a29eaa"/><rect x="1163.69" y="621.45" width="3.92" height="158.15" fill="#a29eaa"/><rect x="1169.50" y="608.98" width="3.92" height="170.62" fill="#a29eaa"/><rect x="1175.30" y="602.56" width="3.92" height="177.04" fill="#a29eaa"/><rect x="1181.11" y="681.14" width="3.92" height="98.46" fill="#a29eaa"/><rect x="1186.92" y="673.59" width="3.92" height="106.01" fill="#a29eaa"/><rect x="1192.72" y="608.23" width="3.92" height="171.37" fill="#a29eaa"/><rect x="1198.53" y="606.34" width="3.92" height="173.26" fill="#a29eaa"/><rect x="1204.33" y="612.76" width="3.92" height="166.84" fill="#a29eaa"/><rect x="1210.14" y="668.67" width="3.92" height="110.93" fill="#a29eaa" opacity="0.5"/><rect x="689" y="777.4" width="525" height="2.2" fill="#b3343b"/><rect x="689" y="779.6" width="525" height="2.2" fill="#e0121b"/><rect x="692" y="783.4" width="48.0" height="7.6" fill="#ece8ff"/><rect x="744.1" y="783.4" width="47.3" height="7.6" fill="#b4a3ff"/><rect x="795.9" y="783.4" width="47.6" height="7.6" fill="#cbbdff"/><rect x="848" y="783.4" width="47.2" height="7.6" fill="#f5f3fd"/><rect x="899.8" y="783.4" width="47.6" height="7.6" fill="#f3f1fb"/><rect x="951.9" y="783.4" width="48.0" height="7.6" fill="#b5a3ff"/><rect x="1004" y="783.4" width="47.7" height="7.6" fill="#7553ff"/><rect x="1056.2" y="783.4" width="47.6" height="7.6" fill="#b8a7ff"/><rect x="1108.7" y="783.4" width="47.3" height="7.6" fill="#dcd3ff"/><rect x="1160.4" y="783.4" width="47.7" height="7.6" fill="#9d85ff"/><rect x="687" y="792.10" width="527.00" height="2.2" fill="#5b5666"/><rect x="708.00" y="793.10" width="2.2" height="10.60" fill="#5b5666"/><rect x="888.20" y="793.10" width="2.2" height="10.60" fill="#5b5666"/><rect x="1065.80" y="793.10" width="2.2" height="10.60" fill="#5b5666"/></svg><div class="t" style="left:-529.5px;width:1200px;text-align:right;top:468.8px;font-size:24px;line-height:24px;font-weight:400;color:#66616f;">8K</div><div class="t" style="left:-529.5px;width:1200px;text-align:right;top:543.6px;font-size:24px;line-height:24px;font-weight:400;color:#66616f;">6K</div><div class="t" style="left:-529.5px;width:1200px;text-align:right;top:618.3px;font-size:24px;line-height:24px;font-weight:400;color:#66616f;">4K</div><div class="t" style="left:-529.5px;width:1200px;text-align:right;top:692.9px;font-size:24px;line-height:24px;font-weight:400;color:#66616f;">2K</div><div class="t" style="left:-529.5px;width:1200px;text-align:right;top:766.5px;font-size:24px;line-height:24px;font-weight:400;color:#66616f;">0</div><div class="t" style="left:1229.2px;top:468.8px;font-size:24px;line-height:24px;font-weight:400;color:#66616f;">0.1%</div><div class="t" style="left:1229.2px;top:528.5px;font-size:24px;line-height:24px;font-weight:400;color:#66616f;">0.08%</div><div class="t" style="left:1229.2px;top:588.3px;font-size:24px;line-height:24px;font-weight:400;color:#66616f;">0.06%</div><div class="t" style="left:1229.2px;top:648.7px;font-size:24px;line-height:24px;font-weight:400;color:#66616f;">0.04%</div><div class="t" style="left:1229.2px;top:708.0px;font-size:24px;line-height:24px;font-weight:400;color:#66616f;">0.02%</div><div class="t" style="left:1229.2px;top:766.5px;font-size:24px;line-height:24px;font-weight:400;color:#66616f;">0</div><div class="t" style="left:109.0px;width:1200px;text-align:center;top:818.1px;font-size:24px;line-height:24px;font-weight:400;color:#66616f;">5:00 AM</div><div class="t" style="left:289.2px;width:1200px;text-align:center;top:818.1px;font-size:24px;line-height:24px;font-weight:400;color:#66616f;">5:00 AM</div><div class="t" style="left:466.8px;width:1200px;text-align:center;top:818.1px;font-size:24px;line-height:24px;font-weight:400;color:#66616f;">5:00 AM</div><div style="position:absolute;left:638.4px;top:436.1px;width:15.6px;height:15.6px;background:#a29eaa;border-radius:50%"></div><div class="t" style="left:664.8px;top:434.0px;font-size:22px;line-height:22px;font-weight:400;color:#2b2834;">Requests</div><div style="position:absolute;left:784.3px;top:436.1px;width:15.6px;height:15.6px;background:#d80a0a;border-radius:50%"></div><div class="t" style="left:811.0px;top:434.0px;font-size:22px;line-height:22px;font-weight:400;color:#2b2834;">Error Rate</div><div style="position:absolute;left:938.0px;top:436.1px;width:15.6px;height:15.6px;background:#7553ff;border-radius:50%"></div><div class="t" style="left:964.8px;top:434.0px;font-size:22px;line-height:22px;font-weight:400;color:#2b2834;">Releases</div><svg style="position:absolute;left:1455.0px;top:430.0px;" width="630.0" height="182.0" viewBox="1455 430 630 182"><rect x="1462.6" y="449.90" width="612.00" height="2" fill="#efedf2"/><rect x="1462.6" y="485.80" width="612.00" height="2" fill="#efedf2"/><rect x="1462.6" y="521.90" width="612.00" height="2" fill="#efedf2"/><rect x="1462.6" y="557.90" width="612.00" height="2" fill="#efedf2"/><rect x="1463.90" y="579.22" width="4.7" height="15.78" fill="#7553ff"/><rect x="1463.90" y="575.65" width="4.7" height="3.57" fill="#f0369a"/><rect x="1463.90" y="567.08" width="4.7" height="8.57" fill="#a29eaa"/><rect x="1470.65" y="553.64" width="4.7" height="41.36" fill="#7553ff"/><rect x="1470.65" y="542.57" width="4.7" height="11.07" fill="#f0369a"/><rect x="1470.65" y="536.38" width="4.7" height="6.19" fill="#a29eaa"/><rect x="1477.40" y="554.47" width="4.7" height="40.53" fill="#7553ff"/><rect x="1477.40" y="543.28" width="4.7" height="11.19" fill="#f0369a"/><rect x="1477.40" y="536.62" width="4.7" height="6.66" fill="#a29eaa"/><rect x="1484.15" y="532.81" width="4.7" height="62.19" fill="#7553ff"/><rect x="1484.15" y="515.56" width="4.7" height="17.25" fill="#f0369a"/><rect x="1484.15" y="506.87" width="4.7" height="8.69" fill="#a29eaa"/><rect x="1490.90" y="529.24" width="4.7" height="65.76" fill="#7553ff"/><rect x="1490.90" y="513.77" width="4.7" height="15.47" fill="#f0369a"/><rect x="1490.90" y="503.30" width="4.7" height="10.47" fill="#a29eaa"/><rect x="1497.65" y="533.65" width="4.7" height="61.35" fill="#7553ff"/><rect x="1497.65" y="515.56" width="4.7" height="18.09" fill="#f0369a"/><rect x="1497.65" y="501.64" width="4.7" height="13.92" fill="#a29eaa"/><rect x="1504.40" y="529.01" width="4.7" height="65.99" fill="#7553ff"/><rect x="1504.40" y="513.18" width="4.7" height="15.83" fill="#f0369a"/><rect x="1504.40" y="503.90" width="4.7" height="9.28" fill="#a29eaa"/><rect x="1511.15" y="529.84" width="4.7" height="65.16" fill="#7553ff"/><rect x="1511.15" y="514.01" width="4.7" height="15.83" fill="#f0369a"/><rect x="1511.15" y="505.21" width="4.7" height="8.81" fill="#a29eaa"/><rect x="1517.90" y="554.83" width="4.7" height="40.17" fill="#7553ff"/><rect x="1517.90" y="544.36" width="4.7" height="10.47" fill="#f0369a"/><rect x="1517.90" y="539.00" width="4.7" height="5.35" fill="#a29eaa"/><rect x="1524.65" y="556.97" width="4.7" height="38.03" fill="#7553ff"/><rect x="1524.65" y="549.71" width="4.7" height="7.26" fill="#f0369a"/><rect x="1524.65" y="542.93" width="4.7" height="6.78" fill="#a29eaa"/><rect x="1531.40" y="531.86" width="4.7" height="63.14" fill="#7553ff"/><rect x="1531.40" y="513.77" width="4.7" height="18.09" fill="#f0369a"/><rect x="1531.40" y="503.07" width="4.7" height="10.71" fill="#a29eaa"/><rect x="1538.15" y="534.95" width="4.7" height="60.05" fill="#7553ff"/><rect x="1538.15" y="520.91" width="4.7" height="14.04" fill="#f0369a"/><rect x="1538.15" y="511.99" width="4.7" height="8.92" fill="#a29eaa"/><rect x="1544.90" y="532.81" width="4.7" height="62.19" fill="#7553ff"/><rect x="1544.90" y="519.72" width="4.7" height="13.09" fill="#f0369a"/><rect x="1544.90" y="506.63" width="4.7" height="13.09" fill="#a29eaa"/><rect x="1551.65" y="534.84" width="4.7" height="60.16" fill="#7553ff"/><rect x="1551.65" y="520.91" width="4.7" height="13.92" fill="#f0369a"/><rect x="1551.65" y="511.99" width="4.7" height="8.92" fill="#a29eaa"/><rect x="1558.40" y="528.65" width="4.7" height="66.35" fill="#7553ff"/><rect x="1558.40" y="513.77" width="4.7" height="14.87" fill="#f0369a"/><rect x="1558.40" y="503.07" width="4.7" height="10.71" fill="#a29eaa"/><rect x="1565.15" y="550.90" width="4.7" height="44.10" fill="#7553ff"/><rect x="1565.15" y="542.69" width="4.7" height="8.21" fill="#f0369a"/><rect x="1565.15" y="536.38" width="4.7" height="6.31" fill="#a29eaa"/><rect x="1571.90" y="558.16" width="4.7" height="36.84" fill="#7553ff"/><rect x="1571.90" y="549.71" width="4.7" height="8.45" fill="#f0369a"/><rect x="1571.90" y="544.12" width="4.7" height="5.59" fill="#a29eaa"/><rect x="1578.65" y="532.22" width="4.7" height="62.78" fill="#7553ff"/><rect x="1578.65" y="520.68" width="4.7" height="11.54" fill="#f0369a"/><rect x="1578.65" y="513.18" width="4.7" height="7.50" fill="#a29eaa"/><rect x="1585.40" y="533.76" width="4.7" height="61.24" fill="#7553ff"/><rect x="1585.40" y="519.72" width="4.7" height="14.04" fill="#f0369a"/><rect x="1585.40" y="509.61" width="4.7" height="10.11" fill="#a29eaa"/><rect x="1592.15" y="531.86" width="4.7" height="63.14" fill="#7553ff"/><rect x="1592.15" y="515.20" width="4.7" height="16.66" fill="#f0369a"/><rect x="1592.15" y="505.21" width="4.7" height="10.00" fill="#a29eaa"/><rect x="1598.90" y="527.10" width="4.7" height="67.90" fill="#7553ff"/><rect x="1598.90" y="513.77" width="4.7" height="13.33" fill="#f0369a"/><rect x="1598.90" y="506.04" width="4.7" height="7.73" fill="#a29eaa"/><rect x="1605.65" y="530.67" width="4.7" height="64.33" fill="#7553ff"/><rect x="1605.65" y="514.73" width="4.7" height="15.94" fill="#f0369a"/><rect x="1605.65" y="504.85" width="4.7" height="9.88" fill="#a29eaa"/><rect x="1612.40" y="556.97" width="4.7" height="38.03" fill="#7553ff"/><rect x="1612.40" y="548.64" width="4.7" height="8.33" fill="#f0369a"/><rect x="1612.40" y="544.71" width="4.7" height="3.93" fill="#a29eaa"/><rect x="1619.15" y="548.04" width="4.7" height="46.96" fill="#7553ff"/><rect x="1619.15" y="540.19" width="4.7" height="7.85" fill="#f0369a"/><rect x="1619.15" y="534.95" width="4.7" height="5.24" fill="#a29eaa"/><rect x="1625.90" y="528.05" width="4.7" height="66.95" fill="#7553ff"/><rect x="1625.90" y="510.80" width="4.7" height="17.25" fill="#f0369a"/><rect x="1625.90" y="499.50" width="4.7" height="11.30" fill="#a29eaa"/><rect x="1632.65" y="526.63" width="4.7" height="68.37" fill="#7553ff"/><rect x="1632.65" y="511.75" width="4.7" height="14.87" fill="#f0369a"/><rect x="1632.65" y="501.88" width="4.7" height="9.88" fill="#a29eaa"/><rect x="1639.40" y="528.05" width="4.7" height="66.95" fill="#7553ff"/><rect x="1639.40" y="509.97" width="4.7" height="18.09" fill="#f0369a"/><rect x="1639.40" y="500.69" width="4.7" height="9.28" fill="#a29eaa"/><rect x="1646.15" y="528.65" width="4.7" height="66.35" fill="#7553ff"/><rect x="1646.15" y="513.77" width="4.7" height="14.87" fill="#f0369a"/><rect x="1646.15" y="504.02" width="4.7" height="9.76" fill="#a29eaa"/><rect x="1652.90" y="534.84" width="4.7" height="60.16" fill="#7553ff"/><rect x="1652.90" y="521.87" width="4.7" height="12.97" fill="#f0369a"/><rect x="1652.90" y="510.80" width="4.7" height="11.07" fill="#a29eaa"/><rect x="1659.65" y="551.85" width="4.7" height="43.15" fill="#7553ff"/><rect x="1659.65" y="542.09" width="4.7" height="9.76" fill="#f0369a"/><rect x="1659.65" y="537.81" width="4.7" height="4.28" fill="#a29eaa"/><rect x="1666.40" y="557.21" width="4.7" height="37.79" fill="#7553ff"/><rect x="1666.40" y="546.73" width="4.7" height="10.47" fill="#f0369a"/><rect x="1666.40" y="542.93" width="4.7" height="3.81" fill="#a29eaa"/><rect x="1673.15" y="526.63" width="4.7" height="68.37" fill="#7553ff"/><rect x="1673.15" y="510.80" width="4.7" height="15.83" fill="#f0369a"/><rect x="1673.15" y="500.92" width="4.7" height="9.88" fill="#a29eaa"/><rect x="1679.90" y="526.86" width="4.7" height="68.14" fill="#7553ff"/><rect x="1679.90" y="510.20" width="4.7" height="16.66" fill="#f0369a"/><rect x="1679.90" y="501.88" width="4.7" height="8.33" fill="#a29eaa"/><rect x="1686.65" y="529.84" width="4.7" height="65.16" fill="#7553ff"/><rect x="1686.65" y="513.77" width="4.7" height="16.06" fill="#f0369a"/><rect x="1686.65" y="504.26" width="4.7" height="9.52" fill="#a29eaa"/><rect x="1693.40" y="526.51" width="4.7" height="68.49" fill="#7553ff"/><rect x="1693.40" y="509.37" width="4.7" height="17.13" fill="#f0369a"/><rect x="1693.40" y="500.09" width="4.7" height="9.28" fill="#a29eaa"/><rect x="1700.15" y="532.72" width="4.7" height="62.28" fill="#7553ff"/><rect x="1700.15" y="519.73" width="4.7" height="12.99" fill="#f0369a"/><rect x="1700.15" y="509.09" width="4.7" height="10.64" fill="#a29eaa"/><rect x="1706.90" y="555.34" width="4.7" height="39.66" fill="#7553ff"/><rect x="1706.90" y="545.49" width="4.7" height="9.85" fill="#f0369a"/><rect x="1706.90" y="539.33" width="4.7" height="6.16" fill="#a29eaa"/><rect x="1713.65" y="554.78" width="4.7" height="40.22" fill="#7553ff"/><rect x="1713.65" y="546.05" width="4.7" height="8.73" fill="#f0369a"/><rect x="1713.65" y="539.10" width="4.7" height="6.94" fill="#a29eaa"/><rect x="1720.40" y="532.05" width="4.7" height="62.95" fill="#7553ff"/><rect x="1720.40" y="516.37" width="4.7" height="15.68" fill="#f0369a"/><rect x="1720.40" y="508.09" width="4.7" height="8.29" fill="#a29eaa"/><rect x="1727.15" y="531.83" width="4.7" height="63.17" fill="#7553ff"/><rect x="1727.15" y="514.47" width="4.7" height="17.36" fill="#f0369a"/><rect x="1727.15" y="503.27" width="4.7" height="11.20" fill="#a29eaa"/><rect x="1733.90" y="527.91" width="4.7" height="67.09" fill="#7553ff"/><rect x="1733.90" y="512.79" width="4.7" height="15.12" fill="#f0369a"/><rect x="1733.90" y="502.15" width="4.7" height="10.64" fill="#a29eaa"/><rect x="1740.65" y="524.55" width="4.7" height="70.45" fill="#7553ff"/><rect x="1740.65" y="505.51" width="4.7" height="19.04" fill="#f0369a"/><rect x="1740.65" y="496.55" width="4.7" height="8.96" fill="#a29eaa"/><rect x="1747.40" y="529.59" width="4.7" height="65.41" fill="#7553ff"/><rect x="1747.40" y="512.00" width="4.7" height="17.58" fill="#f0369a"/><rect x="1747.40" y="503.61" width="4.7" height="8.40" fill="#a29eaa"/><rect x="1754.15" y="557.02" width="4.7" height="37.98" fill="#7553ff"/><rect x="1754.15" y="546.16" width="4.7" height="10.86" fill="#f0369a"/><rect x="1754.15" y="540.00" width="4.7" height="6.16" fill="#a29eaa"/><rect x="1760.90" y="556.46" width="4.7" height="38.54" fill="#7553ff"/><rect x="1760.90" y="548.29" width="4.7" height="8.17" fill="#f0369a"/><rect x="1760.90" y="542.46" width="4.7" height="5.82" fill="#a29eaa"/><rect x="1767.65" y="525.89" width="4.7" height="69.11" fill="#7553ff"/><rect x="1767.65" y="509.43" width="4.7" height="16.46" fill="#f0369a"/><rect x="1767.65" y="501.81" width="4.7" height="7.61" fill="#a29eaa"/><rect x="1774.40" y="529.92" width="4.7" height="65.08" fill="#7553ff"/><rect x="1774.40" y="511.11" width="4.7" height="18.81" fill="#f0369a"/><rect x="1774.40" y="500.47" width="4.7" height="10.64" fill="#a29eaa"/><rect x="1781.15" y="526.00" width="4.7" height="69.00" fill="#7553ff"/><rect x="1781.15" y="512.00" width="4.7" height="14.00" fill="#f0369a"/><rect x="1781.15" y="502.49" width="4.7" height="9.52" fill="#a29eaa"/><rect x="1787.90" y="527.57" width="4.7" height="67.43" fill="#7553ff"/><rect x="1787.90" y="513.01" width="4.7" height="14.56" fill="#f0369a"/><rect x="1787.90" y="502.15" width="4.7" height="10.86" fill="#a29eaa"/><rect x="1794.65" y="527.68" width="4.7" height="67.32" fill="#7553ff"/><rect x="1794.65" y="503.05" width="4.7" height="24.64" fill="#f0369a"/><rect x="1794.65" y="464.08" width="4.7" height="38.97" fill="#a29eaa"/><rect x="1801.40" y="550.08" width="4.7" height="44.92" fill="#7553ff"/><rect x="1801.40" y="529.81" width="4.7" height="20.27" fill="#f0369a"/><rect x="1801.40" y="500.25" width="4.7" height="29.56" fill="#a29eaa"/><rect x="1808.15" y="554.78" width="4.7" height="40.22" fill="#7553ff"/><rect x="1808.15" y="536.86" width="4.7" height="17.92" fill="#f0369a"/><rect x="1808.15" y="505.17" width="4.7" height="31.69" fill="#a29eaa"/><rect x="1814.90" y="535.74" width="4.7" height="59.26" fill="#7553ff"/><rect x="1814.90" y="506.07" width="4.7" height="29.68" fill="#f0369a"/><rect x="1814.90" y="457.69" width="4.7" height="48.38" fill="#a29eaa"/><rect x="1821.65" y="585.91" width="4.7" height="9.09" fill="#7553ff"/><rect x="1821.65" y="580.20" width="4.7" height="5.71" fill="#f0369a"/><rect x="1821.65" y="571.02" width="4.7" height="9.18" fill="#a29eaa"/><rect x="1828.40" y="530.71" width="4.7" height="64.29" fill="#7553ff"/><rect x="1828.40" y="504.17" width="4.7" height="26.54" fill="#f0369a"/><rect x="1828.40" y="453.10" width="4.7" height="51.06" fill="#a29eaa"/><rect x="1835.15" y="526.23" width="4.7" height="68.77" fill="#7553ff"/><rect x="1835.15" y="499.69" width="4.7" height="26.54" fill="#f0369a"/><rect x="1835.15" y="453.44" width="4.7" height="46.25" fill="#a29eaa"/><rect x="1841.90" y="530.15" width="4.7" height="64.85" fill="#7553ff"/><rect x="1841.90" y="513.91" width="4.7" height="16.24" fill="#f0369a"/><rect x="1841.90" y="504.73" width="4.7" height="9.18" fill="#a29eaa"/><rect x="1848.65" y="553.66" width="4.7" height="41.34" fill="#7553ff"/><rect x="1848.65" y="544.70" width="4.7" height="8.96" fill="#f0369a"/><rect x="1848.65" y="538.54" width="4.7" height="6.16" fill="#a29eaa"/><rect x="1855.40" y="554.22" width="4.7" height="40.78" fill="#7553ff"/><rect x="1855.40" y="544.93" width="4.7" height="9.29" fill="#f0369a"/><rect x="1855.40" y="539.33" width="4.7" height="5.60" fill="#a29eaa"/><rect x="1862.15" y="532.72" width="4.7" height="62.28" fill="#7553ff"/><rect x="1862.15" y="517.60" width="4.7" height="15.12" fill="#f0369a"/><rect x="1862.15" y="511.89" width="4.7" height="5.71" fill="#a29eaa"/><rect x="1868.90" y="535.97" width="4.7" height="59.03" fill="#7553ff"/><rect x="1868.90" y="520.85" width="4.7" height="15.12" fill="#f0369a"/><rect x="1868.90" y="510.88" width="4.7" height="9.97" fill="#a29eaa"/><rect x="1875.65" y="529.59" width="4.7" height="65.41" fill="#7553ff"/><rect x="1875.65" y="513.68" width="4.7" height="15.90" fill="#f0369a"/><rect x="1875.65" y="501.59" width="4.7" height="12.09" fill="#a29eaa"/><rect x="1882.40" y="541.57" width="4.7" height="53.43" fill="#7553ff"/><rect x="1882.40" y="528.47" width="4.7" height="13.10" fill="#f0369a"/><rect x="1882.40" y="521.97" width="4.7" height="6.49" fill="#a29eaa"/><rect x="1889.15" y="533.84" width="4.7" height="61.16" fill="#7553ff"/><rect x="1889.15" y="520.96" width="4.7" height="12.88" fill="#f0369a"/><rect x="1889.15" y="512.79" width="4.7" height="8.17" fill="#a29eaa"/><rect x="1895.90" y="559.60" width="4.7" height="35.40" fill="#7553ff"/><rect x="1895.90" y="551.09" width="4.7" height="8.51" fill="#f0369a"/><rect x="1895.90" y="546.16" width="4.7" height="4.93" fill="#a29eaa"/><rect x="1902.65" y="565.64" width="4.7" height="29.36" fill="#7553ff"/><rect x="1902.65" y="554.45" width="4.7" height="11.20" fill="#3a1873"/><rect x="1902.65" y="545.60" width="4.7" height="8.85" fill="#f0369a"/><rect x="1902.65" y="539.44" width="4.7" height="6.16" fill="#a29eaa"/><rect x="1909.40" y="530.93" width="4.7" height="64.07" fill="#3a1873"/><rect x="1909.40" y="514.80" width="4.7" height="16.13" fill="#f0369a"/><rect x="1909.40" y="507.97" width="4.7" height="6.83" fill="#a29eaa"/><rect x="1916.15" y="538.32" width="4.7" height="56.68" fill="#3a1873"/><rect x="1916.15" y="522.87" width="4.7" height="15.45" fill="#f0369a"/><rect x="1916.15" y="518.05" width="4.7" height="4.82" fill="#a29eaa"/><rect x="1922.90" y="535.97" width="4.7" height="59.03" fill="#3a1873"/><rect x="1922.90" y="522.53" width="4.7" height="13.44" fill="#f0369a"/><rect x="1922.90" y="515.59" width="4.7" height="6.94" fill="#a29eaa"/><rect x="1929.65" y="537.76" width="4.7" height="57.24" fill="#3a1873"/><rect x="1929.65" y="524.21" width="4.7" height="13.55" fill="#f0369a"/><rect x="1929.65" y="517.27" width="4.7" height="6.94" fill="#a29eaa"/><rect x="1936.40" y="537.76" width="4.7" height="57.24" fill="#3a1873"/><rect x="1936.40" y="524.77" width="4.7" height="12.99" fill="#f0369a"/><rect x="1936.40" y="513.91" width="4.7" height="10.86" fill="#a29eaa"/><rect x="1943.15" y="557.81" width="4.7" height="37.19" fill="#3a1873"/><rect x="1943.15" y="549.97" width="4.7" height="7.84" fill="#f0369a"/><rect x="1943.15" y="545.82" width="4.7" height="4.14" fill="#a29eaa"/><rect x="1949.90" y="555.90" width="4.7" height="39.10" fill="#3a1873"/><rect x="1949.90" y="546.61" width="4.7" height="9.29" fill="#f0369a"/><rect x="1949.90" y="541.90" width="4.7" height="4.70" fill="#a29eaa"/><rect x="1956.65" y="536.86" width="4.7" height="58.14" fill="#3a1873"/><rect x="1956.65" y="525.11" width="4.7" height="11.76" fill="#f0369a"/><rect x="1956.65" y="515.25" width="4.7" height="9.85" fill="#a29eaa"/><rect x="1963.40" y="531.83" width="4.7" height="63.17" fill="#3a1873"/><rect x="1963.40" y="519.84" width="4.7" height="11.98" fill="#f0369a"/><rect x="1963.40" y="512.23" width="4.7" height="7.61" fill="#a29eaa"/><rect x="1970.15" y="534.85" width="4.7" height="60.15" fill="#3a1873"/><rect x="1970.15" y="522.87" width="4.7" height="11.98" fill="#f0369a"/><rect x="1970.15" y="515.03" width="4.7" height="7.84" fill="#a29eaa"/><rect x="1976.90" y="535.52" width="4.7" height="59.48" fill="#3a1873"/><rect x="1976.90" y="520.96" width="4.7" height="14.56" fill="#f0369a"/><rect x="1976.90" y="512.79" width="4.7" height="8.17" fill="#a29eaa"/><rect x="1983.65" y="533.84" width="4.7" height="61.16" fill="#3a1873"/><rect x="1983.65" y="520.40" width="4.7" height="13.44" fill="#f0369a"/><rect x="1983.65" y="511.11" width="4.7" height="9.29" fill="#a29eaa"/><rect x="1990.40" y="551.42" width="4.7" height="43.58" fill="#3a1873"/><rect x="1990.40" y="542.46" width="4.7" height="8.96" fill="#f0369a"/><rect x="1990.40" y="537.42" width="4.7" height="5.04" fill="#a29eaa"/><rect x="1997.15" y="556.46" width="4.7" height="38.54" fill="#3a1873"/><rect x="1997.15" y="548.06" width="4.7" height="8.40" fill="#f0369a"/><rect x="1997.15" y="544.37" width="4.7" height="3.70" fill="#a29eaa"/><rect x="2003.90" y="534.62" width="4.7" height="60.38" fill="#3a1873"/><rect x="2003.90" y="521.97" width="4.7" height="12.65" fill="#f0369a"/><rect x="2003.90" y="513.01" width="4.7" height="8.96" fill="#a29eaa"/><rect x="2010.65" y="537.76" width="4.7" height="57.24" fill="#3a1873"/><rect x="2010.65" y="526.79" width="4.7" height="10.97" fill="#f0369a"/><rect x="2010.65" y="520.29" width="4.7" height="6.49" fill="#a29eaa"/><rect x="2017.40" y="541.68" width="4.7" height="53.32" fill="#3a1873"/><rect x="2017.40" y="526.79" width="4.7" height="14.89" fill="#f0369a"/><rect x="2017.40" y="518.95" width="4.7" height="7.84" fill="#a29eaa"/><rect x="2024.15" y="535.97" width="4.7" height="59.03" fill="#3a1873"/><rect x="2024.15" y="520.40" width="4.7" height="15.57" fill="#f0369a"/><rect x="2024.15" y="512.56" width="4.7" height="7.84" fill="#a29eaa"/><rect x="2030.90" y="535.52" width="4.7" height="59.48" fill="#3a1873"/><rect x="2030.90" y="520.07" width="4.7" height="15.45" fill="#f0369a"/><rect x="2030.90" y="509.43" width="4.7" height="10.64" fill="#a29eaa"/><rect x="2037.65" y="559.60" width="4.7" height="35.40" fill="#3a1873"/><rect x="2037.65" y="551.42" width="4.7" height="8.17" fill="#f0369a"/><rect x="2037.65" y="547.50" width="4.7" height="3.92" fill="#a29eaa"/><rect x="2044.40" y="555.90" width="4.7" height="39.10" fill="#3a1873"/><rect x="2044.40" y="548.06" width="4.7" height="7.84" fill="#f0369a"/><rect x="2044.40" y="544.14" width="4.7" height="3.92" fill="#a29eaa"/><rect x="2051.15" y="534.40" width="4.7" height="60.60" fill="#3a1873"/><rect x="2051.15" y="521.75" width="4.7" height="12.65" fill="#f0369a"/><rect x="2051.15" y="512.23" width="4.7" height="9.52" fill="#a29eaa"/><rect x="2057.90" y="532.61" width="4.7" height="62.39" fill="#3a1873"/><rect x="2057.90" y="518.05" width="4.7" height="14.56" fill="#f0369a"/><rect x="2057.90" y="511.11" width="4.7" height="6.94" fill="#a29eaa"/><rect x="2064.65" y="534.96" width="4.7" height="60.04" fill="#3a1873"/><rect x="2064.65" y="520.85" width="4.7" height="14.11" fill="#f0369a"/><rect x="2064.65" y="514.80" width="4.7" height="6.05" fill="#a29eaa"/><rect x="2071.40" y="554.45" width="4.7" height="40.55" fill="#7553ff" opacity="0.5"/><rect x="2071.40" y="545.26" width="4.7" height="9.18" fill="#f0369a" opacity="0.5"/><rect x="2071.40" y="541.34" width="4.7" height="3.92" fill="#a29eaa" opacity="0.5"/><rect x="1462.6" y="594.00" width="612.00" height="2.2" fill="#5b5666"/><rect x="1488.00" y="595.00" width="2.2" height="10.00" fill="#5b5666"/><rect x="1695.80" y="595.00" width="2.2" height="10.00" fill="#5b5666"/><rect x="1903.60" y="595.00" width="2.2" height="10.00" fill="#5b5666"/></svg><div class="t" style="left:247.4px;width:1200px;text-align:right;top:439.0px;font-size:24px;line-height:24px;font-weight:400;color:#66616f;">8K</div><div class="t" style="left:247.4px;width:1200px;text-align:right;top:474.9px;font-size:24px;line-height:24px;font-weight:400;color:#66616f;">6K</div><div class="t" style="left:247.4px;width:1200px;text-align:right;top:511.5px;font-size:24px;line-height:24px;font-weight:400;color:#66616f;">4K</div><div class="t" style="left:247.4px;width:1200px;text-align:right;top:547.3px;font-size:24px;line-height:24px;font-weight:400;color:#66616f;">2K</div><div class="t" style="left:247.4px;width:1200px;text-align:right;top:583.3px;font-size:24px;line-height:24px;font-weight:400;color:#66616f;">0</div><div class="t" style="left:889.0px;width:1200px;text-align:center;top:620.3px;font-size:24px;line-height:24px;font-weight:400;color:#66616f;">5:00 AM</div><div class="t" style="left:1096.8px;width:1200px;text-align:center;top:620.3px;font-size:24px;line-height:24px;font-weight:400;color:#66616f;">5:00 AM</div><div class="t" style="left:1304.6px;width:1200px;text-align:center;top:620.3px;font-size:24px;line-height:24px;font-weight:400;color:#66616f;">5:00 AM</div><svg style="position:absolute;left:2230.0px;top:430.0px;" width="630.0" height="250.0" viewBox="2230 430 630 250"><rect x="2238.8" y="449.80" width="612.00" height="2" fill="#efedf2"/><rect x="2238.8" y="501.80" width="612.00" height="2" fill="#efedf2"/><rect x="2238.8" y="556.00" width="612.00" height="2" fill="#efedf2"/><rect x="2238.8" y="607.60" width="612.00" height="2" fill="#efedf2"/><rect x="2239.70" y="632.79" width="4.40" height="28.01" fill="#7553ff"/><rect x="2239.70" y="627.96" width="4.40" height="4.83" fill="#3a1873"/><rect x="2246.46" y="591.75" width="4.40" height="69.05" fill="#7553ff"/><rect x="2246.46" y="575.98" width="4.40" height="15.77" fill="#3a1873"/><rect x="2253.22" y="591.75" width="4.40" height="69.05" fill="#7553ff"/><rect x="2253.22" y="575.98" width="4.40" height="15.77" fill="#3a1873"/><rect x="2259.98" y="557.15" width="4.40" height="103.65" fill="#7553ff"/><rect x="2259.98" y="532.53" width="4.40" height="24.62" fill="#3a1873"/><rect x="2266.74" y="549.91" width="4.40" height="110.89" fill="#7553ff"/><rect x="2266.74" y="527.71" width="4.40" height="22.21" fill="#3a1873"/><rect x="2273.50" y="550.72" width="4.40" height="110.08" fill="#7553ff"/><rect x="2273.50" y="524.97" width="4.40" height="25.75" fill="#3a1873"/><rect x="2280.26" y="551.36" width="4.40" height="109.44" fill="#7553ff"/><rect x="2280.26" y="528.19" width="4.40" height="23.17" fill="#3a1873"/><rect x="2287.02" y="552.97" width="4.40" height="107.83" fill="#7553ff"/><rect x="2287.02" y="530.44" width="4.40" height="22.53" fill="#3a1873"/><rect x="2293.78" y="594.49" width="4.40" height="66.31" fill="#7553ff"/><rect x="2293.78" y="579.52" width="4.40" height="14.97" fill="#3a1873"/><rect x="2300.54" y="595.78" width="4.40" height="65.02" fill="#7553ff"/><rect x="2300.54" y="585.32" width="4.40" height="10.46" fill="#3a1873"/><rect x="2307.30" y="553.13" width="4.40" height="107.67" fill="#7553ff"/><rect x="2307.30" y="527.38" width="4.40" height="25.75" fill="#3a1873"/><rect x="2314.06" y="560.70" width="4.40" height="100.10" fill="#7553ff"/><rect x="2314.06" y="540.26" width="4.40" height="20.44" fill="#3a1873"/><rect x="2320.82" y="551.04" width="4.40" height="109.76" fill="#7553ff"/><rect x="2320.82" y="532.21" width="4.40" height="18.83" fill="#3a1873"/><rect x="2327.58" y="559.41" width="4.40" height="101.39" fill="#7553ff"/><rect x="2327.58" y="540.10" width="4.40" height="19.31" fill="#3a1873"/><rect x="2334.34" y="548.30" width="4.40" height="112.50" fill="#7553ff"/><rect x="2334.34" y="527.22" width="4.40" height="21.08" fill="#3a1873"/><rect x="2341.10" y="587.73" width="4.40" height="73.07" fill="#7553ff"/><rect x="2341.10" y="575.98" width="4.40" height="11.75" fill="#3a1873"/><rect x="2347.86" y="598.19" width="4.40" height="62.61" fill="#7553ff"/><rect x="2347.86" y="586.77" width="4.40" height="11.43" fill="#3a1873"/><rect x="2354.62" y="558.76" width="4.40" height="102.04" fill="#7553ff"/><rect x="2354.62" y="542.19" width="4.40" height="16.58" fill="#3a1873"/><rect x="2361.38" y="556.99" width="4.40" height="103.81" fill="#7553ff"/><rect x="2361.38" y="536.88" width="4.40" height="20.12" fill="#3a1873"/><rect x="2368.14" y="554.26" width="4.40" height="106.54" fill="#7553ff"/><rect x="2368.14" y="530.92" width="4.40" height="23.33" fill="#3a1873"/><rect x="2374.90" y="550.72" width="4.40" height="110.08" fill="#7553ff"/><rect x="2374.90" y="532.05" width="4.40" height="18.67" fill="#3a1873"/><rect x="2381.66" y="552.97" width="4.40" height="107.83" fill="#7553ff"/><rect x="2381.66" y="529.80" width="4.40" height="23.17" fill="#3a1873"/><rect x="2388.42" y="599.32" width="4.40" height="61.48" fill="#7553ff"/><rect x="2388.42" y="587.73" width="4.40" height="11.59" fill="#3a1873"/><rect x="2395.18" y="584.35" width="4.40" height="76.45" fill="#7553ff"/><rect x="2395.18" y="573.25" width="4.40" height="11.10" fill="#3a1873"/><rect x="2401.94" y="547.02" width="4.40" height="113.78" fill="#7553ff"/><rect x="2401.94" y="522.07" width="4.40" height="24.94" fill="#3a1873"/><rect x="2408.70" y="546.69" width="4.40" height="114.11" fill="#7553ff"/><rect x="2408.70" y="526.10" width="4.40" height="20.60" fill="#3a1873"/><rect x="2415.46" y="549.91" width="4.40" height="110.89" fill="#7553ff"/><rect x="2415.46" y="523.68" width="4.40" height="26.23" fill="#3a1873"/><rect x="2422.22" y="549.43" width="4.40" height="111.37" fill="#7553ff"/><rect x="2422.22" y="528.51" width="4.40" height="20.92" fill="#3a1873"/><rect x="2428.98" y="556.67" width="4.40" height="104.13" fill="#7553ff"/><rect x="2428.98" y="538.17" width="4.40" height="18.51" fill="#3a1873"/><rect x="2435.74" y="591.27" width="4.40" height="69.53" fill="#7553ff"/><rect x="2435.74" y="577.91" width="4.40" height="13.36" fill="#3a1873"/><rect x="2442.50" y="600.12" width="4.40" height="60.68" fill="#7553ff"/><rect x="2442.50" y="585.32" width="4.40" height="14.81" fill="#3a1873"/><rect x="2449.26" y="546.21" width="4.40" height="114.59" fill="#7553ff"/><rect x="2449.26" y="524.16" width="4.40" height="22.05" fill="#3a1873"/><rect x="2456.02" y="549.91" width="4.40" height="110.89" fill="#7553ff"/><rect x="2456.02" y="526.42" width="4.40" height="23.50" fill="#3a1873"/><rect x="2462.78" y="551.04" width="4.40" height="109.76" fill="#7553ff"/><rect x="2462.78" y="529.31" width="4.40" height="21.73" fill="#3a1873"/><rect x="2469.54" y="547.50" width="4.40" height="113.30" fill="#7553ff"/><rect x="2469.54" y="523.36" width="4.40" height="24.14" fill="#3a1873"/><rect x="2476.30" y="554.58" width="4.40" height="106.22" fill="#7553ff"/><rect x="2476.30" y="535.75" width="4.40" height="18.83" fill="#3a1873"/><rect x="2483.06" y="594.17" width="4.40" height="66.63" fill="#7553ff"/><rect x="2483.06" y="580.49" width="4.40" height="13.68" fill="#3a1873"/><rect x="2489.82" y="591.27" width="4.40" height="69.53" fill="#7553ff"/><rect x="2489.82" y="579.68" width="4.40" height="11.59" fill="#3a1873"/><rect x="2496.58" y="557.48" width="4.40" height="103.32" fill="#7553ff"/><rect x="2496.58" y="534.95" width="4.40" height="22.53" fill="#3a1873"/><rect x="2503.34" y="551.84" width="4.40" height="108.96" fill="#7553ff"/><rect x="2503.34" y="527.38" width="4.40" height="24.46" fill="#3a1873"/><rect x="2510.10" y="548.30" width="4.40" height="112.50" fill="#7553ff"/><rect x="2510.10" y="526.42" width="4.40" height="21.89" fill="#3a1873"/><rect x="2516.86" y="545.09" width="4.40" height="115.71" fill="#7553ff"/><rect x="2516.86" y="517.73" width="4.40" height="27.36" fill="#3a1873"/><rect x="2523.62" y="552.97" width="4.40" height="107.83" fill="#7553ff"/><rect x="2523.62" y="528.19" width="4.40" height="24.78" fill="#3a1873"/><rect x="2530.38" y="596.10" width="4.40" height="64.70" fill="#7553ff"/><rect x="2530.38" y="580.81" width="4.40" height="15.29" fill="#3a1873"/><rect x="2537.14" y="595.78" width="4.40" height="65.02" fill="#7553ff"/><rect x="2537.14" y="584.51" width="4.40" height="11.26" fill="#3a1873"/><rect x="2543.90" y="548.63" width="4.40" height="112.17" fill="#7553ff"/><rect x="2543.90" y="525.29" width="4.40" height="23.33" fill="#3a1873"/><rect x="2550.66" y="551.04" width="4.40" height="109.76" fill="#7553ff"/><rect x="2550.66" y="523.68" width="4.40" height="27.36" fill="#3a1873"/><rect x="2557.42" y="546.69" width="4.40" height="114.11" fill="#7553ff"/><rect x="2557.42" y="526.58" width="4.40" height="20.12" fill="#3a1873"/><rect x="2564.18" y="546.21" width="4.40" height="114.59" fill="#7553ff"/><rect x="2564.18" y="526.10" width="4.40" height="20.12" fill="#3a1873"/><rect x="2570.94" y="505.66" width="4.40" height="155.14" fill="#7553ff"/><rect x="2570.94" y="470.58" width="4.40" height="35.08" fill="#3a1873"/><rect x="2577.70" y="552.65" width="4.40" height="108.15" fill="#7553ff"/><rect x="2577.70" y="523.20" width="4.40" height="29.45" fill="#3a1873"/><rect x="2584.46" y="556.19" width="4.40" height="104.61" fill="#7553ff"/><rect x="2584.46" y="530.44" width="4.40" height="25.75" fill="#3a1873"/><rect x="2591.22" y="503.24" width="4.40" height="157.56" fill="#7553ff"/><rect x="2591.22" y="461.24" width="4.40" height="42.00" fill="#3a1873"/><rect x="2597.98" y="633.11" width="4.40" height="27.69" fill="#7553ff"/><rect x="2597.98" y="625.87" width="4.40" height="7.24" fill="#3a1873"/><rect x="2604.74" y="492.30" width="4.40" height="168.50" fill="#7553ff"/><rect x="2604.74" y="454.48" width="4.40" height="37.82" fill="#3a1873"/><rect x="2611.50" y="493.11" width="4.40" height="167.69" fill="#7553ff"/><rect x="2611.50" y="455.29" width="4.40" height="37.82" fill="#3a1873"/><rect x="2618.26" y="553.13" width="4.40" height="107.67" fill="#7553ff"/><rect x="2618.26" y="529.64" width="4.40" height="23.50" fill="#3a1873"/><rect x="2625.02" y="591.75" width="4.40" height="69.05" fill="#7553ff"/><rect x="2625.02" y="579.20" width="4.40" height="12.55" fill="#3a1873"/><rect x="2631.78" y="594.01" width="4.40" height="66.79" fill="#7553ff"/><rect x="2631.78" y="580.33" width="4.40" height="13.68" fill="#3a1873"/><rect x="2638.54" y="561.82" width="4.40" height="98.98" fill="#7553ff"/><rect x="2638.54" y="539.77" width="4.40" height="22.05" fill="#3a1873"/><rect x="2645.30" y="561.02" width="4.40" height="99.78" fill="#7553ff"/><rect x="2645.30" y="538.49" width="4.40" height="22.53" fill="#3a1873"/><rect x="2652.06" y="547.82" width="4.40" height="112.98" fill="#7553ff"/><rect x="2652.06" y="524.97" width="4.40" height="22.85" fill="#3a1873"/><rect x="2658.82" y="573.25" width="4.40" height="87.55" fill="#7553ff"/><rect x="2658.82" y="554.26" width="4.40" height="18.99" fill="#3a1873"/><rect x="2665.58" y="559.09" width="4.40" height="101.71" fill="#7553ff"/><rect x="2665.58" y="541.06" width="4.40" height="18.02" fill="#3a1873"/><rect x="2672.34" y="602.21" width="4.40" height="58.59" fill="#7553ff"/><rect x="2672.34" y="589.98" width="4.40" height="12.23" fill="#3a1873"/><rect x="2679.10" y="592.88" width="4.40" height="67.92" fill="#7553ff"/><rect x="2679.10" y="580.33" width="4.40" height="12.55" fill="#3a1873"/><rect x="2685.86" y="557.80" width="4.40" height="103.00" fill="#7553ff"/><rect x="2685.86" y="534.63" width="4.40" height="23.17" fill="#3a1873"/><rect x="2692.62" y="571.16" width="4.40" height="89.64" fill="#7553ff"/><rect x="2692.62" y="549.11" width="4.40" height="22.05" fill="#3a1873"/><rect x="2699.38" y="564.72" width="4.40" height="96.08" fill="#7553ff"/><rect x="2699.38" y="545.41" width="4.40" height="19.31" fill="#3a1873"/><rect x="2706.14" y="567.13" width="4.40" height="93.67" fill="#7553ff"/><rect x="2706.14" y="548.14" width="4.40" height="18.99" fill="#3a1873"/><rect x="2712.90" y="561.50" width="4.40" height="99.30" fill="#7553ff"/><rect x="2712.90" y="542.67" width="4.40" height="18.83" fill="#3a1873"/><rect x="2719.66" y="599.80" width="4.40" height="61.00" fill="#7553ff"/><rect x="2719.66" y="589.34" width="4.40" height="10.46" fill="#3a1873"/><rect x="2726.42" y="596.90" width="4.40" height="63.90" fill="#7553ff"/><rect x="2726.42" y="583.22" width="4.40" height="13.68" fill="#3a1873"/><rect x="2733.18" y="561.82" width="4.40" height="98.98" fill="#7553ff"/><rect x="2733.18" y="545.09" width="4.40" height="16.74" fill="#3a1873"/><rect x="2739.94" y="557.48" width="4.40" height="103.32" fill="#7553ff"/><rect x="2739.94" y="541.06" width="4.40" height="16.41" fill="#3a1873"/><rect x="2746.70" y="561.82" width="4.40" height="98.98" fill="#7553ff"/><rect x="2746.70" y="544.60" width="4.40" height="17.22" fill="#3a1873"/><rect x="2753.46" y="561.50" width="4.40" height="99.30" fill="#7553ff"/><rect x="2753.46" y="541.06" width="4.40" height="20.44" fill="#3a1873"/><rect x="2760.22" y="558.76" width="4.40" height="102.04" fill="#7553ff"/><rect x="2760.22" y="539.29" width="4.40" height="19.47" fill="#3a1873"/><rect x="2766.98" y="589.34" width="4.40" height="71.46" fill="#7553ff"/><rect x="2766.98" y="577.11" width="4.40" height="12.23" fill="#3a1873"/><rect x="2773.74" y="598.83" width="4.40" height="61.97" fill="#7553ff"/><rect x="2773.74" y="587.57" width="4.40" height="11.26" fill="#3a1873"/><rect x="2780.50" y="560.21" width="4.40" height="100.59" fill="#7553ff"/><rect x="2780.50" y="542.19" width="4.40" height="18.02" fill="#3a1873"/><rect x="2787.26" y="567.13" width="4.40" height="93.67" fill="#7553ff"/><rect x="2787.26" y="552.33" width="4.40" height="14.81" fill="#3a1873"/><rect x="2794.02" y="570.83" width="4.40" height="89.97" fill="#7553ff"/><rect x="2794.02" y="549.91" width="4.40" height="20.92" fill="#3a1873"/><rect x="2800.78" y="563.11" width="4.40" height="97.69" fill="#7553ff"/><rect x="2800.78" y="541.06" width="4.40" height="22.05" fill="#3a1873"/><rect x="2807.54" y="558.28" width="4.40" height="102.52" fill="#7553ff"/><rect x="2807.54" y="536.56" width="4.40" height="21.73" fill="#3a1873"/><rect x="2814.30" y="603.34" width="4.40" height="57.46" fill="#7553ff"/><rect x="2814.30" y="592.08" width="4.40" height="11.26" fill="#3a1873"/><rect x="2821.06" y="598.03" width="4.40" height="62.77" fill="#7553ff"/><rect x="2821.06" y="586.77" width="4.40" height="11.26" fill="#3a1873"/><rect x="2827.82" y="558.76" width="4.40" height="102.04" fill="#7553ff"/><rect x="2827.82" y="540.10" width="4.40" height="18.67" fill="#3a1873"/><rect x="2834.58" y="559.57" width="4.40" height="101.23" fill="#7553ff"/><rect x="2834.58" y="539.29" width="4.40" height="20.28" fill="#3a1873"/><rect x="2841.34" y="564.24" width="4.40" height="96.56" fill="#7553ff"/><rect x="2841.34" y="544.12" width="4.40" height="20.12" fill="#3a1873"/><rect x="2848.10" y="595.78" width="4.40" height="65.02" fill="#7553ff" opacity="0.5"/><rect x="2848.10" y="582.90" width="4.40" height="12.87" fill="#3a1873" opacity="0.5"/><rect x="2238.8" y="659.80" width="612.20" height="2.2" fill="#5b5666"/><rect x="2264.20" y="660.80" width="2.2" height="10.50" fill="#5b5666"/><rect x="2472.00" y="660.80" width="2.2" height="10.50" fill="#5b5666"/><rect x="2679.80" y="660.80" width="2.2" height="10.50" fill="#5b5666"/></svg><div class="t" style="left:1023.0px;width:1200px;text-align:right;top:439.0px;font-size:24px;line-height:24px;font-weight:400;color:#66616f;">8K</div><div class="t" style="left:1023.0px;width:1200px;text-align:right;top:491.5px;font-size:24px;line-height:24px;font-weight:400;color:#66616f;">6K</div><div class="t" style="left:1023.0px;width:1200px;text-align:right;top:544.8px;font-size:24px;line-height:24px;font-weight:400;color:#66616f;">4K</div><div class="t" style="left:1023.0px;width:1200px;text-align:right;top:597.3px;font-size:24px;line-height:24px;font-weight:400;color:#66616f;">2K</div><div class="t" style="left:1023.0px;width:1200px;text-align:right;top:649.3px;font-size:24px;line-height:24px;font-weight:400;color:#66616f;">0</div><div class="t" style="left:1665.2px;width:1200px;text-align:center;top:686.4px;font-size:24px;line-height:24px;font-weight:400;color:#66616f;">5:00 AM</div><div class="t" style="left:1873.0px;width:1200px;text-align:center;top:686.4px;font-size:24px;line-height:24px;font-weight:400;color:#66616f;">5:00 AM</div><div class="t" style="left:2080.8px;width:1200px;text-align:center;top:686.4px;font-size:24px;line-height:24px;font-weight:400;color:#66616f;">5:00 AM</div><svg style="position:absolute;left:700.0px;top:990.0px;" width="605.0" height="175.0" viewBox="700 990 605 175"><rect x="707" y="1002.00" width="591.30" height="2" fill="#efedf2"/><rect x="707" y="1022.00" width="591.30" height="2" fill="#efedf2"/><rect x="707" y="1043.50" width="591.30" height="2" fill="#efedf2"/><rect x="707" y="1063.90" width="591.30" height="2" fill="#efedf2"/><rect x="707" y="1084.30" width="591.30" height="2" fill="#efedf2"/><rect x="707" y="1105.30" width="591.30" height="2" fill="#efedf2"/><rect x="707" y="1126.00" width="591.30" height="2" fill="#efedf2"/><rect x="707.20" y="1137.22" width="4.50" height="9.68" fill="#7553ff"/><rect x="707.20" y="1133.42" width="4.50" height="3.80" fill="#3a1873"/><rect x="707.20" y="1129.30" width="4.50" height="4.12" fill="#f0369a"/><rect x="707.20" y="1121.16" width="4.50" height="8.14" fill="#a29eaa"/><rect x="713.71" y="1119.32" width="4.50" height="27.58" fill="#7553ff"/><rect x="713.71" y="1112.81" width="4.50" height="6.51" fill="#3a1873"/><rect x="713.71" y="1104.46" width="4.50" height="8.35" fill="#f0369a"/><rect x="713.71" y="1098.71" width="4.50" height="5.75" fill="#a29eaa"/><rect x="720.22" y="1121.71" width="4.50" height="25.19" fill="#7553ff"/><rect x="720.22" y="1110.86" width="4.50" height="10.85" fill="#3a1873"/><rect x="720.22" y="1100.88" width="4.50" height="9.98" fill="#f0369a"/><rect x="720.22" y="1096.32" width="4.50" height="4.56" fill="#a29eaa"/><rect x="726.73" y="1110.86" width="4.50" height="36.04" fill="#7553ff"/><rect x="726.73" y="1094.91" width="4.50" height="15.95" fill="#3a1873"/><rect x="726.73" y="1080.81" width="4.50" height="14.10" fill="#f0369a"/><rect x="726.73" y="1070.51" width="4.50" height="10.30" fill="#a29eaa"/><rect x="733.24" y="1109.01" width="4.50" height="37.89" fill="#7553ff"/><rect x="733.24" y="1093.50" width="4.50" height="15.51" fill="#3a1873"/><rect x="733.24" y="1077.88" width="4.50" height="15.62" fill="#f0369a"/><rect x="733.24" y="1069.20" width="4.50" height="8.68" fill="#a29eaa"/><rect x="739.75" y="1106.84" width="4.50" height="40.06" fill="#7553ff"/><rect x="739.75" y="1090.90" width="4.50" height="15.95" fill="#3a1873"/><rect x="739.75" y="1076.47" width="4.50" height="14.43" fill="#f0369a"/><rect x="739.75" y="1068.34" width="4.50" height="8.14" fill="#a29eaa"/><rect x="746.26" y="1106.84" width="4.50" height="40.06" fill="#7553ff"/><rect x="746.26" y="1087.86" width="4.50" height="18.98" fill="#3a1873"/><rect x="746.26" y="1074.63" width="4.50" height="13.23" fill="#f0369a"/><rect x="746.26" y="1064.22" width="4.50" height="10.41" fill="#a29eaa"/><rect x="752.77" y="1107.93" width="4.50" height="38.97" fill="#7553ff"/><rect x="752.77" y="1090.03" width="4.50" height="17.90" fill="#3a1873"/><rect x="752.77" y="1075.71" width="4.50" height="14.32" fill="#f0369a"/><rect x="752.77" y="1067.04" width="4.50" height="8.68" fill="#a29eaa"/><rect x="759.28" y="1122.03" width="4.50" height="24.87" fill="#7553ff"/><rect x="759.28" y="1114.76" width="4.50" height="7.27" fill="#3a1873"/><rect x="759.28" y="1104.89" width="4.50" height="9.87" fill="#f0369a"/><rect x="759.28" y="1100.66" width="4.50" height="4.23" fill="#a29eaa"/><rect x="765.79" y="1127.45" width="4.50" height="19.45" fill="#7553ff"/><rect x="765.79" y="1118.99" width="4.50" height="8.46" fill="#3a1873"/><rect x="765.79" y="1109.77" width="4.50" height="9.22" fill="#f0369a"/><rect x="765.79" y="1103.92" width="4.50" height="5.86" fill="#a29eaa"/><rect x="772.30" y="1105.76" width="4.50" height="41.14" fill="#7553ff"/><rect x="772.30" y="1092.53" width="4.50" height="13.23" fill="#3a1873"/><rect x="772.30" y="1076.80" width="4.50" height="15.73" fill="#f0369a"/><rect x="772.30" y="1069.20" width="4.50" height="7.59" fill="#a29eaa"/><rect x="778.81" y="1107.17" width="4.50" height="39.73" fill="#7553ff"/><rect x="778.81" y="1092.96" width="4.50" height="14.21" fill="#3a1873"/><rect x="778.81" y="1080.81" width="4.50" height="12.15" fill="#f0369a"/><rect x="778.81" y="1074.30" width="4.50" height="6.51" fill="#a29eaa"/><rect x="785.32" y="1101.96" width="4.50" height="44.94" fill="#7553ff"/><rect x="785.32" y="1087.86" width="4.50" height="14.10" fill="#3a1873"/><rect x="785.32" y="1069.42" width="4.50" height="18.44" fill="#f0369a"/><rect x="785.32" y="1064.00" width="4.50" height="5.42" fill="#a29eaa"/><rect x="791.83" y="1107.71" width="4.50" height="39.19" fill="#7553ff"/><rect x="791.83" y="1089.49" width="4.50" height="18.22" fill="#3a1873"/><rect x="791.83" y="1073.76" width="4.50" height="15.73" fill="#f0369a"/><rect x="791.83" y="1068.12" width="4.50" height="5.64" fill="#a29eaa"/><rect x="798.34" y="1103.92" width="4.50" height="42.98" fill="#7553ff"/><rect x="798.34" y="1086.02" width="4.50" height="17.90" fill="#3a1873"/><rect x="798.34" y="1069.96" width="4.50" height="16.05" fill="#f0369a"/><rect x="798.34" y="1062.70" width="4.50" height="7.27" fill="#a29eaa"/><rect x="804.85" y="1119.32" width="4.50" height="27.58" fill="#7553ff"/><rect x="804.85" y="1109.88" width="4.50" height="9.44" fill="#3a1873"/><rect x="804.85" y="1099.79" width="4.50" height="10.09" fill="#f0369a"/><rect x="804.85" y="1093.29" width="4.50" height="6.51" fill="#a29eaa"/><rect x="811.36" y="1121.49" width="4.50" height="25.41" fill="#7553ff"/><rect x="811.36" y="1111.73" width="4.50" height="9.76" fill="#3a1873"/><rect x="811.36" y="1100.88" width="4.50" height="10.85" fill="#f0369a"/><rect x="811.36" y="1097.08" width="4.50" height="3.80" fill="#a29eaa"/><rect x="817.87" y="1109.77" width="4.50" height="37.13" fill="#7553ff"/><rect x="817.87" y="1092.74" width="4.50" height="17.03" fill="#3a1873"/><rect x="817.87" y="1078.97" width="4.50" height="13.78" fill="#f0369a"/><rect x="817.87" y="1072.13" width="4.50" height="6.83" fill="#a29eaa"/><rect x="824.38" y="1103.92" width="4.50" height="42.98" fill="#7553ff"/><rect x="824.38" y="1090.03" width="4.50" height="13.88" fill="#3a1873"/><rect x="824.38" y="1077.88" width="4.50" height="12.15" fill="#f0369a"/><rect x="824.38" y="1073.76" width="4.50" height="4.12" fill="#a29eaa"/><rect x="830.89" y="1110.42" width="4.50" height="36.48" fill="#7553ff"/><rect x="830.89" y="1091.98" width="4.50" height="18.44" fill="#3a1873"/><rect x="830.89" y="1077.56" width="4.50" height="14.43" fill="#f0369a"/><rect x="830.89" y="1071.37" width="4.50" height="6.18" fill="#a29eaa"/><rect x="837.40" y="1111.73" width="4.50" height="35.17" fill="#7553ff"/><rect x="837.40" y="1091.66" width="4.50" height="20.07" fill="#3a1873"/><rect x="837.40" y="1073.76" width="4.50" height="17.90" fill="#f0369a"/><rect x="837.40" y="1066.93" width="4.50" height="6.83" fill="#a29eaa"/><rect x="843.91" y="1106.09" width="4.50" height="40.81" fill="#7553ff"/><rect x="843.91" y="1090.90" width="4.50" height="15.19" fill="#3a1873"/><rect x="843.91" y="1075.71" width="4.50" height="15.19" fill="#f0369a"/><rect x="843.91" y="1067.25" width="4.50" height="8.46" fill="#a29eaa"/><rect x="850.42" y="1123.12" width="4.50" height="23.78" fill="#7553ff"/><rect x="850.42" y="1111.94" width="4.50" height="11.17" fill="#3a1873"/><rect x="850.42" y="1101.75" width="4.50" height="10.20" fill="#f0369a"/><rect x="850.42" y="1097.08" width="4.50" height="4.66" fill="#a29eaa"/><rect x="856.93" y="1118.23" width="4.50" height="28.67" fill="#7553ff"/><rect x="856.93" y="1105.76" width="4.50" height="12.47" fill="#3a1873"/><rect x="856.93" y="1093.50" width="4.50" height="12.26" fill="#f0369a"/><rect x="856.93" y="1086.02" width="4.50" height="7.48" fill="#a29eaa"/><rect x="863.44" y="1102.51" width="4.50" height="44.39" fill="#7553ff"/><rect x="863.44" y="1082.98" width="4.50" height="19.52" fill="#3a1873"/><rect x="863.44" y="1065.08" width="4.50" height="17.90" fill="#f0369a"/><rect x="863.44" y="1058.25" width="4.50" height="6.83" fill="#a29eaa"/><rect x="869.95" y="1098.49" width="4.50" height="48.41" fill="#7553ff"/><rect x="869.95" y="1082.11" width="4.50" height="16.38" fill="#3a1873"/><rect x="869.95" y="1066.93" width="4.50" height="15.19" fill="#f0369a"/><rect x="869.95" y="1058.90" width="4.50" height="8.03" fill="#a29eaa"/><rect x="876.46" y="1106.63" width="4.50" height="40.27" fill="#7553ff"/><rect x="876.46" y="1091.98" width="4.50" height="14.64" fill="#3a1873"/><rect x="876.46" y="1076.80" width="4.50" height="15.19" fill="#f0369a"/><rect x="876.46" y="1068.88" width="4.50" height="7.92" fill="#a29eaa"/><rect x="882.97" y="1110.10" width="4.50" height="36.80" fill="#7553ff"/><rect x="882.97" y="1091.98" width="4.50" height="18.11" fill="#3a1873"/><rect x="882.97" y="1079.94" width="4.50" height="12.04" fill="#f0369a"/><rect x="882.97" y="1067.79" width="4.50" height="12.15" fill="#a29eaa"/><rect x="889.48" y="1106.84" width="4.50" height="40.06" fill="#7553ff"/><rect x="889.48" y="1095.46" width="4.50" height="11.39" fill="#3a1873"/><rect x="889.48" y="1079.18" width="4.50" height="16.27" fill="#f0369a"/><rect x="889.48" y="1073.76" width="4.50" height="5.42" fill="#a29eaa"/><rect x="895.99" y="1128.00" width="4.50" height="18.90" fill="#7553ff"/><rect x="895.99" y="1119.86" width="4.50" height="8.14" fill="#3a1873"/><rect x="895.99" y="1106.84" width="4.50" height="13.02" fill="#f0369a"/><rect x="895.99" y="1099.58" width="4.50" height="7.27" fill="#a29eaa"/><rect x="902.50" y="1127.45" width="4.50" height="19.45" fill="#7553ff"/><rect x="902.50" y="1117.91" width="4.50" height="9.55" fill="#3a1873"/><rect x="902.50" y="1107.71" width="4.50" height="10.20" fill="#f0369a"/><rect x="902.50" y="1102.18" width="4.50" height="5.53" fill="#a29eaa"/><rect x="909.01" y="1107.93" width="4.50" height="38.97" fill="#7553ff"/><rect x="909.01" y="1093.50" width="4.50" height="14.43" fill="#3a1873"/><rect x="909.01" y="1075.71" width="4.50" height="17.79" fill="#f0369a"/><rect x="909.01" y="1066.38" width="4.50" height="9.33" fill="#a29eaa"/><rect x="915.52" y="1105.00" width="4.50" height="41.90" fill="#7553ff"/><rect x="915.52" y="1087.65" width="4.50" height="17.36" fill="#3a1873"/><rect x="915.52" y="1074.85" width="4.50" height="12.80" fill="#f0369a"/><rect x="915.52" y="1066.38" width="4.50" height="8.46" fill="#a29eaa"/><rect x="922.03" y="1107.93" width="4.50" height="38.97" fill="#7553ff"/><rect x="922.03" y="1090.57" width="4.50" height="17.36" fill="#3a1873"/><rect x="922.03" y="1075.71" width="4.50" height="14.86" fill="#f0369a"/><rect x="922.03" y="1066.38" width="4.50" height="9.33" fill="#a29eaa"/><rect x="928.54" y="1101.10" width="4.50" height="45.80" fill="#7553ff"/><rect x="928.54" y="1084.93" width="4.50" height="16.16" fill="#3a1873"/><rect x="928.54" y="1069.96" width="4.50" height="14.97" fill="#f0369a"/><rect x="928.54" y="1059.98" width="4.50" height="9.98" fill="#a29eaa"/><rect x="935.05" y="1106.09" width="4.50" height="40.81" fill="#7553ff"/><rect x="935.05" y="1094.04" width="4.50" height="12.04" fill="#3a1873"/><rect x="935.05" y="1079.94" width="4.50" height="14.10" fill="#f0369a"/><rect x="935.05" y="1073.44" width="4.50" height="6.51" fill="#a29eaa"/><rect x="941.56" y="1122.03" width="4.50" height="24.87" fill="#7553ff"/><rect x="941.56" y="1113.03" width="4.50" height="9.00" fill="#3a1873"/><rect x="941.56" y="1101.96" width="4.50" height="11.06" fill="#f0369a"/><rect x="941.56" y="1096.00" width="4.50" height="5.97" fill="#a29eaa"/><rect x="948.07" y="1119.10" width="4.50" height="27.80" fill="#7553ff"/><rect x="948.07" y="1105.98" width="4.50" height="13.13" fill="#3a1873"/><rect x="948.07" y="1095.24" width="4.50" height="10.74" fill="#f0369a"/><rect x="948.07" y="1091.44" width="4.50" height="3.80" fill="#a29eaa"/><rect x="954.58" y="1106.63" width="4.50" height="40.27" fill="#7553ff"/><rect x="954.58" y="1092.96" width="4.50" height="13.67" fill="#3a1873"/><rect x="954.58" y="1073.98" width="4.50" height="18.98" fill="#f0369a"/><rect x="954.58" y="1067.04" width="4.50" height="6.94" fill="#a29eaa"/><rect x="961.09" y="1102.83" width="4.50" height="44.07" fill="#7553ff"/><rect x="961.09" y="1088.95" width="4.50" height="13.88" fill="#3a1873"/><rect x="961.09" y="1076.80" width="4.50" height="12.15" fill="#f0369a"/><rect x="961.09" y="1069.20" width="4.50" height="7.59" fill="#a29eaa"/><rect x="967.60" y="1109.56" width="4.50" height="37.34" fill="#7553ff"/><rect x="967.60" y="1092.96" width="4.50" height="16.60" fill="#3a1873"/><rect x="967.60" y="1078.64" width="4.50" height="14.32" fill="#f0369a"/><rect x="967.60" y="1070.29" width="4.50" height="8.35" fill="#a29eaa"/><rect x="974.11" y="1101.96" width="4.50" height="44.94" fill="#7553ff"/><rect x="974.11" y="1086.56" width="4.50" height="15.40" fill="#3a1873"/><rect x="974.11" y="1066.38" width="4.50" height="20.18" fill="#f0369a"/><rect x="974.11" y="1059.44" width="4.50" height="6.94" fill="#a29eaa"/><rect x="980.62" y="1107.06" width="4.50" height="39.84" fill="#7553ff"/><rect x="980.62" y="1091.98" width="4.50" height="15.08" fill="#3a1873"/><rect x="980.62" y="1075.60" width="4.50" height="16.38" fill="#f0369a"/><rect x="980.62" y="1066.49" width="4.50" height="9.11" fill="#a29eaa"/><rect x="987.13" y="1123.87" width="4.50" height="23.03" fill="#7553ff"/><rect x="987.13" y="1115.52" width="4.50" height="8.35" fill="#3a1873"/><rect x="987.13" y="1102.83" width="4.50" height="12.69" fill="#f0369a"/><rect x="987.13" y="1098.93" width="4.50" height="3.90" fill="#a29eaa"/><rect x="993.64" y="1121.71" width="4.50" height="25.19" fill="#7553ff"/><rect x="993.64" y="1114.65" width="4.50" height="7.05" fill="#3a1873"/><rect x="993.64" y="1101.96" width="4.50" height="12.69" fill="#f0369a"/><rect x="993.64" y="1096.76" width="4.50" height="5.21" fill="#a29eaa"/><rect x="1000.15" y="1103.81" width="4.50" height="43.09" fill="#7553ff"/><rect x="1000.15" y="1090.03" width="4.50" height="13.78" fill="#3a1873"/><rect x="1000.15" y="1074.09" width="4.50" height="15.95" fill="#f0369a"/><rect x="1000.15" y="1067.47" width="4.50" height="6.62" fill="#a29eaa"/><rect x="1006.66" y="1101.96" width="4.50" height="44.94" fill="#7553ff"/><rect x="1006.66" y="1089.16" width="4.50" height="12.80" fill="#3a1873"/><rect x="1006.66" y="1071.81" width="4.50" height="17.36" fill="#f0369a"/><rect x="1006.66" y="1065.08" width="4.50" height="6.73" fill="#a29eaa"/><rect x="1013.17" y="1107.93" width="4.50" height="38.97" fill="#7553ff"/><rect x="1013.17" y="1091.98" width="4.50" height="15.95" fill="#3a1873"/><rect x="1013.17" y="1072.89" width="4.50" height="19.09" fill="#f0369a"/><rect x="1013.17" y="1062.91" width="4.50" height="9.98" fill="#a29eaa"/><rect x="1019.68" y="1106.09" width="4.50" height="40.81" fill="#7553ff"/><rect x="1019.68" y="1087.65" width="4.50" height="18.44" fill="#3a1873"/><rect x="1019.68" y="1070.51" width="4.50" height="17.14" fill="#f0369a"/><rect x="1019.68" y="1062.05" width="4.50" height="8.46" fill="#a29eaa"/><rect x="1026.19" y="1082.11" width="4.50" height="64.79" fill="#7553ff"/><rect x="1026.19" y="1065.63" width="4.50" height="16.49" fill="#3a1873"/><rect x="1026.19" y="1048.05" width="4.50" height="17.57" fill="#f0369a"/><rect x="1026.19" y="1038.51" width="4.50" height="9.55" fill="#a29eaa"/><rect x="1032.70" y="1099.03" width="4.50" height="47.87" fill="#7553ff"/><rect x="1032.70" y="1086.02" width="4.50" height="13.02" fill="#3a1873"/><rect x="1032.70" y="1076.47" width="4.50" height="9.55" fill="#f0369a"/><rect x="1032.70" y="1072.46" width="4.50" height="4.01" fill="#a29eaa"/><rect x="1039.21" y="1093.50" width="4.50" height="53.40" fill="#7553ff"/><rect x="1039.21" y="1086.02" width="4.50" height="7.48" fill="#3a1873"/><rect x="1039.21" y="1074.85" width="4.50" height="11.17" fill="#f0369a"/><rect x="1039.21" y="1070.51" width="4.50" height="4.34" fill="#a29eaa"/><rect x="1045.72" y="1066.49" width="4.50" height="80.41" fill="#7553ff"/><rect x="1045.72" y="1049.03" width="4.50" height="17.46" fill="#3a1873"/><rect x="1045.72" y="1037.97" width="4.50" height="11.06" fill="#f0369a"/><rect x="1045.72" y="1032.22" width="4.50" height="5.75" fill="#a29eaa"/><rect x="1052.23" y="1132.55" width="4.50" height="14.35" fill="#7553ff"/><rect x="1052.23" y="1130.17" width="4.50" height="2.39" fill="#3a1873"/><rect x="1052.23" y="1128.86" width="4.50" height="1.30" fill="#f0369a"/><rect x="1052.23" y="1127.45" width="4.50" height="1.41" fill="#a29eaa"/><rect x="1058.74" y="1058.57" width="4.50" height="88.33" fill="#7553ff"/><rect x="1058.74" y="1043.71" width="4.50" height="14.86" fill="#3a1873"/><rect x="1058.74" y="1030.16" width="4.50" height="13.56" fill="#f0369a"/><rect x="1058.74" y="1022.24" width="4.50" height="7.92" fill="#a29eaa"/><rect x="1065.25" y="1070.51" width="4.50" height="76.39" fill="#7553ff"/><rect x="1065.25" y="1056.08" width="4.50" height="14.43" fill="#3a1873"/><rect x="1065.25" y="1039.81" width="4.50" height="16.27" fill="#f0369a"/><rect x="1065.25" y="1032.00" width="4.50" height="7.81" fill="#a29eaa"/><rect x="1071.76" y="1109.01" width="4.50" height="37.89" fill="#7553ff"/><rect x="1071.76" y="1094.91" width="4.50" height="14.10" fill="#3a1873"/><rect x="1071.76" y="1080.49" width="4.50" height="14.43" fill="#f0369a"/><rect x="1071.76" y="1072.46" width="4.50" height="8.03" fill="#a29eaa"/><rect x="1078.27" y="1123.12" width="4.50" height="23.78" fill="#7553ff"/><rect x="1078.27" y="1112.81" width="4.50" height="10.30" fill="#3a1873"/><rect x="1078.27" y="1103.59" width="4.50" height="9.22" fill="#f0369a"/><rect x="1078.27" y="1096.76" width="4.50" height="6.83" fill="#a29eaa"/><rect x="1084.78" y="1122.36" width="4.50" height="24.54" fill="#7553ff"/><rect x="1084.78" y="1112.81" width="4.50" height="9.55" fill="#3a1873"/><rect x="1084.78" y="1103.81" width="4.50" height="9.00" fill="#f0369a"/><rect x="1084.78" y="1100.34" width="4.50" height="3.47" fill="#a29eaa"/><rect x="1091.29" y="1113.90" width="4.50" height="33.00" fill="#7553ff"/><rect x="1091.29" y="1101.10" width="4.50" height="12.80" fill="#3a1873"/><rect x="1091.29" y="1082.44" width="4.50" height="18.66" fill="#f0369a"/><rect x="1091.29" y="1075.17" width="4.50" height="7.27" fill="#a29eaa"/><rect x="1097.80" y="1109.88" width="4.50" height="37.02" fill="#7553ff"/><rect x="1097.80" y="1096.21" width="4.50" height="13.67" fill="#3a1873"/><rect x="1097.80" y="1082.66" width="4.50" height="13.56" fill="#f0369a"/><rect x="1097.80" y="1077.23" width="4.50" height="5.42" fill="#a29eaa"/><rect x="1104.31" y="1105.00" width="4.50" height="41.90" fill="#7553ff"/><rect x="1104.31" y="1085.91" width="4.50" height="19.09" fill="#3a1873"/><rect x="1104.31" y="1071.92" width="4.50" height="13.99" fill="#f0369a"/><rect x="1104.31" y="1062.59" width="4.50" height="9.33" fill="#a29eaa"/><rect x="1110.82" y="1116.61" width="4.50" height="30.29" fill="#7553ff"/><rect x="1110.82" y="1104.68" width="4.50" height="11.93" fill="#3a1873"/><rect x="1110.82" y="1089.81" width="4.50" height="14.86" fill="#f0369a"/><rect x="1110.82" y="1083.85" width="4.50" height="5.97" fill="#a29eaa"/><rect x="1117.33" y="1110.64" width="4.50" height="36.26" fill="#7553ff"/><rect x="1117.33" y="1098.71" width="4.50" height="11.93" fill="#3a1873"/><rect x="1117.33" y="1082.98" width="4.50" height="15.73" fill="#f0369a"/><rect x="1117.33" y="1078.86" width="4.50" height="4.12" fill="#a29eaa"/><rect x="1123.84" y="1120.95" width="4.50" height="25.95" fill="#7553ff"/><rect x="1123.84" y="1113.90" width="4.50" height="7.05" fill="#3a1873"/><rect x="1123.84" y="1105.98" width="4.50" height="7.92" fill="#f0369a"/><rect x="1123.84" y="1102.18" width="4.50" height="3.80" fill="#a29eaa"/><rect x="1130.35" y="1120.19" width="4.50" height="26.71" fill="#7553ff"/><rect x="1130.35" y="1109.77" width="4.50" height="10.41" fill="#3a1873"/><rect x="1130.35" y="1100.55" width="4.50" height="9.22" fill="#f0369a"/><rect x="1130.35" y="1098.17" width="4.50" height="2.39" fill="#a29eaa"/><rect x="1136.86" y="1109.23" width="4.50" height="37.67" fill="#7553ff"/><rect x="1136.86" y="1092.96" width="4.50" height="16.27" fill="#3a1873"/><rect x="1136.86" y="1081.90" width="4.50" height="11.06" fill="#f0369a"/><rect x="1136.86" y="1073.76" width="4.50" height="8.14" fill="#a29eaa"/><rect x="1143.37" y="1114.98" width="4.50" height="31.92" fill="#7553ff"/><rect x="1143.37" y="1099.58" width="4.50" height="15.40" fill="#3a1873"/><rect x="1143.37" y="1084.61" width="4.50" height="14.97" fill="#f0369a"/><rect x="1143.37" y="1079.40" width="4.50" height="5.21" fill="#a29eaa"/><rect x="1149.88" y="1106.30" width="4.50" height="40.60" fill="#7553ff"/><rect x="1149.88" y="1092.53" width="4.50" height="13.78" fill="#3a1873"/><rect x="1149.88" y="1080.05" width="4.50" height="12.47" fill="#f0369a"/><rect x="1149.88" y="1077.56" width="4.50" height="2.49" fill="#a29eaa"/><rect x="1156.39" y="1114.44" width="4.50" height="32.46" fill="#7553ff"/><rect x="1156.39" y="1098.17" width="4.50" height="16.27" fill="#3a1873"/><rect x="1156.39" y="1084.93" width="4.50" height="13.23" fill="#f0369a"/><rect x="1156.39" y="1076.80" width="4.50" height="8.14" fill="#a29eaa"/><rect x="1162.90" y="1107.17" width="4.50" height="39.73" fill="#7553ff"/><rect x="1162.90" y="1092.74" width="4.50" height="14.43" fill="#3a1873"/><rect x="1162.90" y="1075.71" width="4.50" height="17.03" fill="#f0369a"/><rect x="1162.90" y="1070.18" width="4.50" height="5.53" fill="#a29eaa"/><rect x="1169.41" y="1124.42" width="4.50" height="22.48" fill="#7553ff"/><rect x="1169.41" y="1115.85" width="4.50" height="8.57" fill="#3a1873"/><rect x="1169.41" y="1106.84" width="4.50" height="9.00" fill="#f0369a"/><rect x="1169.41" y="1101.42" width="4.50" height="5.42" fill="#a29eaa"/><rect x="1175.92" y="1123.44" width="4.50" height="23.46" fill="#7553ff"/><rect x="1175.92" y="1113.35" width="4.50" height="10.09" fill="#3a1873"/><rect x="1175.92" y="1102.83" width="4.50" height="10.52" fill="#f0369a"/><rect x="1175.92" y="1098.17" width="4.50" height="4.66" fill="#a29eaa"/><rect x="1182.43" y="1108.25" width="4.50" height="38.65" fill="#7553ff"/><rect x="1182.43" y="1093.50" width="4.50" height="14.75" fill="#3a1873"/><rect x="1182.43" y="1081.90" width="4.50" height="11.61" fill="#f0369a"/><rect x="1182.43" y="1075.06" width="4.50" height="6.83" fill="#a29eaa"/><rect x="1188.94" y="1112.81" width="4.50" height="34.09" fill="#7553ff"/><rect x="1188.94" y="1098.17" width="4.50" height="14.64" fill="#3a1873"/><rect x="1188.94" y="1083.52" width="4.50" height="14.64" fill="#f0369a"/><rect x="1188.94" y="1074.30" width="4.50" height="9.22" fill="#a29eaa"/><rect x="1195.45" y="1113.35" width="4.50" height="33.55" fill="#7553ff"/><rect x="1195.45" y="1102.83" width="4.50" height="10.52" fill="#3a1873"/><rect x="1195.45" y="1085.91" width="4.50" height="16.92" fill="#f0369a"/><rect x="1195.45" y="1074.85" width="4.50" height="11.06" fill="#a29eaa"/><rect x="1201.96" y="1113.03" width="4.50" height="33.87" fill="#7553ff"/><rect x="1201.96" y="1096.87" width="4.50" height="16.16" fill="#3a1873"/><rect x="1201.96" y="1080.81" width="4.50" height="16.05" fill="#f0369a"/><rect x="1201.96" y="1074.09" width="4.50" height="6.73" fill="#a29eaa"/><rect x="1208.47" y="1106.84" width="4.50" height="40.06" fill="#7553ff"/><rect x="1208.47" y="1095.13" width="4.50" height="11.71" fill="#3a1873"/><rect x="1208.47" y="1079.51" width="4.50" height="15.62" fill="#f0369a"/><rect x="1208.47" y="1073.22" width="4.50" height="6.29" fill="#a29eaa"/><rect x="1214.98" y="1124.53" width="4.50" height="22.37" fill="#7553ff"/><rect x="1214.98" y="1113.35" width="4.50" height="11.17" fill="#3a1873"/><rect x="1214.98" y="1103.81" width="4.50" height="9.55" fill="#f0369a"/><rect x="1214.98" y="1101.10" width="4.50" height="2.71" fill="#a29eaa"/><rect x="1221.49" y="1127.67" width="4.50" height="19.23" fill="#7553ff"/><rect x="1221.49" y="1119.86" width="4.50" height="7.81" fill="#3a1873"/><rect x="1221.49" y="1110.86" width="4.50" height="9.00" fill="#f0369a"/><rect x="1221.49" y="1104.68" width="4.50" height="6.18" fill="#a29eaa"/><rect x="1228.00" y="1109.01" width="4.50" height="37.89" fill="#7553ff"/><rect x="1228.00" y="1093.83" width="4.50" height="15.19" fill="#3a1873"/><rect x="1228.00" y="1077.56" width="4.50" height="16.27" fill="#f0369a"/><rect x="1228.00" y="1068.12" width="4.50" height="9.44" fill="#a29eaa"/><rect x="1234.51" y="1114.11" width="4.50" height="32.79" fill="#7553ff"/><rect x="1234.51" y="1100.88" width="4.50" height="13.23" fill="#3a1873"/><rect x="1234.51" y="1084.39" width="4.50" height="16.49" fill="#f0369a"/><rect x="1234.51" y="1077.88" width="4.50" height="6.51" fill="#a29eaa"/><rect x="1241.02" y="1115.20" width="4.50" height="31.70" fill="#7553ff"/><rect x="1241.02" y="1102.83" width="4.50" height="12.37" fill="#3a1873"/><rect x="1241.02" y="1088.95" width="4.50" height="13.88" fill="#f0369a"/><rect x="1241.02" y="1084.07" width="4.50" height="4.88" fill="#a29eaa"/><rect x="1247.53" y="1111.18" width="4.50" height="35.72" fill="#7553ff"/><rect x="1247.53" y="1094.91" width="4.50" height="16.27" fill="#3a1873"/><rect x="1247.53" y="1078.42" width="4.50" height="16.49" fill="#f0369a"/><rect x="1247.53" y="1074.30" width="4.50" height="4.12" fill="#a29eaa"/><rect x="1254.04" y="1109.77" width="4.50" height="37.13" fill="#7553ff"/><rect x="1254.04" y="1089.49" width="4.50" height="20.28" fill="#3a1873"/><rect x="1254.04" y="1075.93" width="4.50" height="13.56" fill="#f0369a"/><rect x="1254.04" y="1070.18" width="4.50" height="5.75" fill="#a29eaa"/><rect x="1260.55" y="1131.25" width="4.50" height="15.65" fill="#7553ff"/><rect x="1260.55" y="1122.03" width="4.50" height="9.22" fill="#3a1873"/><rect x="1260.55" y="1113.90" width="4.50" height="8.14" fill="#f0369a"/><rect x="1260.55" y="1109.77" width="4.50" height="4.12" fill="#a29eaa"/><rect x="1267.06" y="1124.74" width="4.50" height="22.16" fill="#7553ff"/><rect x="1267.06" y="1113.35" width="4.50" height="11.39" fill="#3a1873"/><rect x="1267.06" y="1104.35" width="4.50" height="9.00" fill="#f0369a"/><rect x="1267.06" y="1096.21" width="4.50" height="8.14" fill="#a29eaa"/><rect x="1273.57" y="1112.27" width="4.50" height="34.63" fill="#7553ff"/><rect x="1273.57" y="1097.62" width="4.50" height="14.64" fill="#3a1873"/><rect x="1273.57" y="1083.85" width="4.50" height="13.78" fill="#f0369a"/><rect x="1273.57" y="1075.06" width="4.50" height="8.79" fill="#a29eaa"/><rect x="1280.08" y="1110.10" width="4.50" height="36.80" fill="#7553ff"/><rect x="1280.08" y="1097.62" width="4.50" height="12.47" fill="#3a1873"/><rect x="1280.08" y="1085.37" width="4.50" height="12.26" fill="#f0369a"/><rect x="1280.08" y="1074.30" width="4.50" height="11.06" fill="#a29eaa"/><rect x="1286.59" y="1111.18" width="4.50" height="35.72" fill="#7553ff"/><rect x="1286.59" y="1094.91" width="4.50" height="16.27" fill="#3a1873"/><rect x="1286.59" y="1081.90" width="4.50" height="13.02" fill="#f0369a"/><rect x="1286.59" y="1074.85" width="4.50" height="7.05" fill="#a29eaa"/><rect x="1293.10" y="1126.69" width="4.50" height="20.21" fill="#7553ff" opacity="0.5"/><rect x="1293.10" y="1116.06" width="4.50" height="10.63" fill="#3a1873" opacity="0.5"/><rect x="1293.10" y="1105.22" width="4.50" height="10.85" fill="#f0369a" opacity="0.5"/><rect x="1293.10" y="1098.17" width="4.50" height="7.05" fill="#a29eaa" opacity="0.5"/><rect x="707" y="1145.90" width="591.30" height="2.2" fill="#5b5666"/><rect x="730.00" y="1146.90" width="2.2" height="10.10" fill="#5b5666"/><rect x="931.70" y="1146.90" width="2.2" height="10.10" fill="#5b5666"/><rect x="1133.80" y="1146.90" width="2.2" height="10.10" fill="#5b5666"/></svg><div class="t" style="left:-508.5px;width:1200px;text-align:right;top:1011.3px;font-size:24px;line-height:24px;font-weight:400;color:#66616f;">3K</div><div class="t" style="left:-508.5px;width:1200px;text-align:right;top:1032.3px;font-size:24px;line-height:24px;font-weight:400;color:#66616f;">2.5K</div><div class="t" style="left:-508.5px;width:1200px;text-align:right;top:1052.8px;font-size:24px;line-height:24px;font-weight:400;color:#66616f;">2K</div><div class="t" style="left:-508.5px;width:1200px;text-align:right;top:1073.6px;font-size:24px;line-height:24px;font-weight:400;color:#66616f;">1.5K</div><div class="t" style="left:-508.5px;width:1200px;text-align:right;top:1094.3px;font-size:24px;line-height:24px;font-weight:400;color:#66616f;">1K</div><div class="t" style="left:-508.5px;width:1200px;text-align:right;top:1115.5px;font-size:24px;line-height:24px;font-weight:400;color:#66616f;">500</div><div class="t" style="left:131.0px;width:1200px;text-align:center;top:1172.3px;font-size:24px;line-height:24px;font-weight:400;color:#66616f;">5:00 AM</div><div class="t" style="left:332.7px;width:1200px;text-align:center;top:1172.3px;font-size:24px;line-height:24px;font-weight:400;color:#66616f;">5:00 AM</div><div class="t" style="left:534.8px;width:1200px;text-align:center;top:1172.3px;font-size:24px;line-height:24px;font-weight:400;color:#66616f;">5:00 AM</div><svg style="position:absolute;left:1470.0px;top:990.0px;" width="615.0" height="175.0" viewBox="1470 990 615 175"><rect x="1478.4" y="1002.00" width="596.20" height="2" fill="#efedf2"/><rect x="1478.4" y="1029.90" width="596.20" height="2" fill="#efedf2"/><rect x="1478.4" y="1059.70" width="596.20" height="2" fill="#efedf2"/><rect x="1478.4" y="1087.70" width="596.20" height="2" fill="#efedf2"/><rect x="1478.4" y="1117.80" width="596.20" height="2" fill="#efedf2"/><rect x="1479.20" y="1131.79" width="4.50" height="15.11" fill="#7553ff"/><rect x="1479.20" y="1119.86" width="4.50" height="11.93" fill="#3a1873"/><rect x="1479.20" y="1117.15" width="4.50" height="2.71" fill="#f0369a"/><rect x="1485.74" y="1104.68" width="4.50" height="42.22" fill="#7553ff"/><rect x="1485.74" y="1082.11" width="4.50" height="22.56" fill="#3a1873"/><rect x="1485.74" y="1067.47" width="4.50" height="14.64" fill="#f0369a"/><rect x="1492.28" y="1112.27" width="4.50" height="34.63" fill="#7553ff"/><rect x="1492.28" y="1089.49" width="4.50" height="22.78" fill="#3a1873"/><rect x="1492.28" y="1080.81" width="4.50" height="8.68" fill="#f0369a"/><rect x="1498.82" y="1099.79" width="4.50" height="47.11" fill="#7553ff"/><rect x="1498.82" y="1067.25" width="4.50" height="32.54" fill="#3a1873"/><rect x="1498.82" y="1041.22" width="4.50" height="26.03" fill="#f0369a"/><rect x="1505.36" y="1085.37" width="4.50" height="61.53" fill="#7553ff"/><rect x="1505.36" y="1045.02" width="4.50" height="40.35" fill="#3a1873"/><rect x="1505.36" y="1028.74" width="4.50" height="16.27" fill="#f0369a"/><rect x="1511.90" y="1092.96" width="4.50" height="53.94" fill="#7553ff"/><rect x="1511.90" y="1053.15" width="4.50" height="39.81" fill="#3a1873"/><rect x="1511.90" y="1041.22" width="4.50" height="11.93" fill="#f0369a"/><rect x="1518.44" y="1091.33" width="4.50" height="55.57" fill="#7553ff"/><rect x="1518.44" y="1052.07" width="4.50" height="39.27" fill="#3a1873"/><rect x="1518.44" y="1034.17" width="4.50" height="17.90" fill="#f0369a"/><rect x="1524.98" y="1096.00" width="4.50" height="50.90" fill="#7553ff"/><rect x="1524.98" y="1061.61" width="4.50" height="34.39" fill="#3a1873"/><rect x="1524.98" y="1042.85" width="4.50" height="18.77" fill="#f0369a"/><rect x="1531.52" y="1117.69" width="4.50" height="29.21" fill="#7553ff"/><rect x="1531.52" y="1094.91" width="4.50" height="22.78" fill="#3a1873"/><rect x="1531.52" y="1086.23" width="4.50" height="8.68" fill="#f0369a"/><rect x="1538.06" y="1111.18" width="4.50" height="35.72" fill="#7553ff"/><rect x="1538.06" y="1094.91" width="4.50" height="16.27" fill="#3a1873"/><rect x="1538.06" y="1082.98" width="4.50" height="11.93" fill="#f0369a"/><rect x="1544.60" y="1098.49" width="4.50" height="48.41" fill="#7553ff"/><rect x="1544.60" y="1056.73" width="4.50" height="41.76" fill="#3a1873"/><rect x="1544.60" y="1040.35" width="4.50" height="16.38" fill="#f0369a"/><rect x="1551.14" y="1101.64" width="4.50" height="45.26" fill="#7553ff"/><rect x="1551.14" y="1065.84" width="4.50" height="35.80" fill="#3a1873"/><rect x="1551.14" y="1048.05" width="4.50" height="17.79" fill="#f0369a"/><rect x="1557.68" y="1109.01" width="4.50" height="37.89" fill="#7553ff"/><rect x="1557.68" y="1064.54" width="4.50" height="44.47" fill="#3a1873"/><rect x="1557.68" y="1046.64" width="4.50" height="17.90" fill="#f0369a"/><rect x="1564.22" y="1093.83" width="4.50" height="53.07" fill="#7553ff"/><rect x="1564.22" y="1068.55" width="4.50" height="25.27" fill="#3a1873"/><rect x="1564.22" y="1047.19" width="4.50" height="21.37" fill="#f0369a"/><rect x="1570.76" y="1091.44" width="4.50" height="55.46" fill="#7553ff"/><rect x="1570.76" y="1052.93" width="4.50" height="38.51" fill="#3a1873"/><rect x="1570.76" y="1030.37" width="4.50" height="22.56" fill="#f0369a"/><rect x="1577.30" y="1103.81" width="4.50" height="43.09" fill="#7553ff"/><rect x="1577.30" y="1080.81" width="4.50" height="23.00" fill="#3a1873"/><rect x="1577.30" y="1073.76" width="4.50" height="7.05" fill="#f0369a"/><rect x="1583.84" y="1116.93" width="4.50" height="29.97" fill="#7553ff"/><rect x="1583.84" y="1099.58" width="4.50" height="17.36" fill="#3a1873"/><rect x="1583.84" y="1094.91" width="4.50" height="4.66" fill="#f0369a"/><rect x="1590.38" y="1100.01" width="4.50" height="46.89" fill="#7553ff"/><rect x="1590.38" y="1065.84" width="4.50" height="34.17" fill="#3a1873"/><rect x="1590.38" y="1049.90" width="4.50" height="15.95" fill="#f0369a"/><rect x="1596.92" y="1092.96" width="4.50" height="53.94" fill="#7553ff"/><rect x="1596.92" y="1059.12" width="4.50" height="33.84" fill="#3a1873"/><rect x="1596.92" y="1045.02" width="4.50" height="14.10" fill="#f0369a"/><rect x="1603.46" y="1098.17" width="4.50" height="48.73" fill="#7553ff"/><rect x="1603.46" y="1064.76" width="4.50" height="33.41" fill="#3a1873"/><rect x="1603.46" y="1035.80" width="4.50" height="28.96" fill="#f0369a"/><rect x="1610.00" y="1096.76" width="4.50" height="50.14" fill="#7553ff"/><rect x="1610.00" y="1059.88" width="4.50" height="36.88" fill="#3a1873"/><rect x="1610.00" y="1037.10" width="4.50" height="22.78" fill="#f0369a"/><rect x="1616.54" y="1081.14" width="4.50" height="65.76" fill="#7553ff"/><rect x="1616.54" y="1051.52" width="4.50" height="29.61" fill="#3a1873"/><rect x="1616.54" y="1034.17" width="4.50" height="17.36" fill="#f0369a"/><rect x="1623.08" y="1120.40" width="4.50" height="26.50" fill="#7553ff"/><rect x="1623.08" y="1098.93" width="4.50" height="21.48" fill="#3a1873"/><rect x="1623.08" y="1089.16" width="4.50" height="9.76" fill="#f0369a"/><rect x="1629.62" y="1111.18" width="4.50" height="35.72" fill="#7553ff"/><rect x="1629.62" y="1086.45" width="4.50" height="24.73" fill="#3a1873"/><rect x="1629.62" y="1077.01" width="4.50" height="9.44" fill="#f0369a"/><rect x="1636.16" y="1092.96" width="4.50" height="53.94" fill="#7553ff"/><rect x="1636.16" y="1062.15" width="4.50" height="30.81" fill="#3a1873"/><rect x="1636.16" y="1045.02" width="4.50" height="17.14" fill="#f0369a"/><rect x="1642.70" y="1086.02" width="4.50" height="60.88" fill="#7553ff"/><rect x="1642.70" y="1046.86" width="4.50" height="39.16" fill="#3a1873"/><rect x="1642.70" y="1027.12" width="4.50" height="19.74" fill="#f0369a"/><rect x="1649.24" y="1091.33" width="4.50" height="55.57" fill="#7553ff"/><rect x="1649.24" y="1049.90" width="4.50" height="41.44" fill="#3a1873"/><rect x="1649.24" y="1027.99" width="4.50" height="21.91" fill="#f0369a"/><rect x="1655.78" y="1087.65" width="4.50" height="59.25" fill="#7553ff"/><rect x="1655.78" y="1049.03" width="4.50" height="38.62" fill="#3a1873"/><rect x="1655.78" y="1037.21" width="4.50" height="11.82" fill="#f0369a"/><rect x="1662.32" y="1100.66" width="4.50" height="46.24" fill="#7553ff"/><rect x="1662.32" y="1059.88" width="4.50" height="40.79" fill="#3a1873"/><rect x="1662.32" y="1042.85" width="4.50" height="17.03" fill="#f0369a"/><rect x="1668.86" y="1103.81" width="4.50" height="43.09" fill="#7553ff"/><rect x="1668.86" y="1080.81" width="4.50" height="23.00" fill="#3a1873"/><rect x="1668.86" y="1068.88" width="4.50" height="11.93" fill="#f0369a"/><rect x="1675.40" y="1117.69" width="4.50" height="29.21" fill="#7553ff"/><rect x="1675.40" y="1096.32" width="4.50" height="21.37" fill="#3a1873"/><rect x="1675.40" y="1082.98" width="4.50" height="13.34" fill="#f0369a"/><rect x="1681.94" y="1096.87" width="4.50" height="50.03" fill="#7553ff"/><rect x="1681.94" y="1058.79" width="4.50" height="38.07" fill="#3a1873"/><rect x="1681.94" y="1035.80" width="4.50" height="23.00" fill="#f0369a"/><rect x="1688.48" y="1095.24" width="4.50" height="51.66" fill="#7553ff"/><rect x="1688.48" y="1049.90" width="4.50" height="45.34" fill="#3a1873"/><rect x="1688.48" y="1028.74" width="4.50" height="21.15" fill="#f0369a"/><rect x="1695.02" y="1099.79" width="4.50" height="47.11" fill="#7553ff"/><rect x="1695.02" y="1054.78" width="4.50" height="45.02" fill="#3a1873"/><rect x="1695.02" y="1036.66" width="4.50" height="18.11" fill="#f0369a"/><rect x="1701.56" y="1097.62" width="4.50" height="49.28" fill="#7553ff"/><rect x="1701.56" y="1067.79" width="4.50" height="29.83" fill="#3a1873"/><rect x="1701.56" y="1040.35" width="4.50" height="27.44" fill="#f0369a"/><rect x="1708.10" y="1082.11" width="4.50" height="64.79" fill="#7553ff"/><rect x="1708.10" y="1052.93" width="4.50" height="29.18" fill="#3a1873"/><rect x="1708.10" y="1039.92" width="4.50" height="13.02" fill="#f0369a"/><rect x="1714.64" y="1114.76" width="4.50" height="32.14" fill="#7553ff"/><rect x="1714.64" y="1096.00" width="4.50" height="18.77" fill="#3a1873"/><rect x="1714.64" y="1085.37" width="4.50" height="10.63" fill="#f0369a"/><rect x="1721.18" y="1111.18" width="4.50" height="35.72" fill="#7553ff"/><rect x="1721.18" y="1097.08" width="4.50" height="14.10" fill="#3a1873"/><rect x="1721.18" y="1086.02" width="4.50" height="11.06" fill="#f0369a"/><rect x="1727.72" y="1103.59" width="4.50" height="43.31" fill="#7553ff"/><rect x="1727.72" y="1069.10" width="4.50" height="34.49" fill="#3a1873"/><rect x="1727.72" y="1050.44" width="4.50" height="18.66" fill="#f0369a"/><rect x="1734.26" y="1090.57" width="4.50" height="56.33" fill="#7553ff"/><rect x="1734.26" y="1055.32" width="4.50" height="35.25" fill="#3a1873"/><rect x="1734.26" y="1039.92" width="4.50" height="15.40" fill="#f0369a"/><rect x="1740.80" y="1095.13" width="4.50" height="51.77" fill="#7553ff"/><rect x="1740.80" y="1044.47" width="4.50" height="50.66" fill="#3a1873"/><rect x="1740.80" y="1027.12" width="4.50" height="17.36" fill="#f0369a"/><rect x="1747.34" y="1080.59" width="4.50" height="66.31" fill="#7553ff"/><rect x="1747.34" y="1043.93" width="4.50" height="36.66" fill="#3a1873"/><rect x="1747.34" y="1023.10" width="4.50" height="20.83" fill="#f0369a"/><rect x="1753.88" y="1096.00" width="4.50" height="50.90" fill="#7553ff"/><rect x="1753.88" y="1061.61" width="4.50" height="34.39" fill="#3a1873"/><rect x="1753.88" y="1047.40" width="4.50" height="14.21" fill="#f0369a"/><rect x="1760.42" y="1110.64" width="4.50" height="36.26" fill="#7553ff"/><rect x="1760.42" y="1088.95" width="4.50" height="21.69" fill="#3a1873"/><rect x="1760.42" y="1076.80" width="4.50" height="12.15" fill="#f0369a"/><rect x="1766.96" y="1116.82" width="4.50" height="30.08" fill="#7553ff"/><rect x="1766.96" y="1097.08" width="4.50" height="19.74" fill="#3a1873"/><rect x="1766.96" y="1087.10" width="4.50" height="9.98" fill="#f0369a"/><rect x="1773.50" y="1091.44" width="4.50" height="55.46" fill="#7553ff"/><rect x="1773.50" y="1041.98" width="4.50" height="49.46" fill="#3a1873"/><rect x="1773.50" y="1026.25" width="4.50" height="15.73" fill="#f0369a"/><rect x="1780.04" y="1088.19" width="4.50" height="58.71" fill="#7553ff"/><rect x="1780.04" y="1055.32" width="4.50" height="32.87" fill="#3a1873"/><rect x="1780.04" y="1035.80" width="4.50" height="19.52" fill="#f0369a"/><rect x="1786.58" y="1099.25" width="4.50" height="47.65" fill="#7553ff"/><rect x="1786.58" y="1064.76" width="4.50" height="34.49" fill="#3a1873"/><rect x="1786.58" y="1039.92" width="4.50" height="24.84" fill="#f0369a"/><rect x="1793.12" y="1100.66" width="4.50" height="46.24" fill="#7553ff"/><rect x="1793.12" y="1058.90" width="4.50" height="41.76" fill="#3a1873"/><rect x="1793.12" y="1035.80" width="4.50" height="23.10" fill="#f0369a"/><rect x="1799.66" y="1076.80" width="4.50" height="70.10" fill="#7553ff"/><rect x="1799.66" y="1039.92" width="4.50" height="36.88" fill="#3a1873"/><rect x="1799.66" y="1018.77" width="4.50" height="21.15" fill="#f0369a"/><rect x="1806.20" y="1110.10" width="4.50" height="36.80" fill="#7553ff"/><rect x="1806.20" y="1086.45" width="4.50" height="23.65" fill="#3a1873"/><rect x="1806.20" y="1068.34" width="4.50" height="18.11" fill="#f0369a"/><rect x="1812.74" y="1113.90" width="4.50" height="33.00" fill="#7553ff"/><rect x="1812.74" y="1090.03" width="4.50" height="23.86" fill="#3a1873"/><rect x="1812.74" y="1077.77" width="4.50" height="12.26" fill="#f0369a"/><rect x="1819.28" y="1102.18" width="4.50" height="44.72" fill="#7553ff"/><rect x="1819.28" y="1065.84" width="4.50" height="36.34" fill="#3a1873"/><rect x="1819.28" y="1049.90" width="4.50" height="15.95" fill="#f0369a"/><rect x="1825.82" y="1140.47" width="4.50" height="6.43" fill="#7553ff"/><rect x="1825.82" y="1131.25" width="4.50" height="9.22" fill="#3a1873"/><rect x="1825.82" y="1129.08" width="4.50" height="2.17" fill="#f0369a"/><rect x="1832.36" y="1095.78" width="4.50" height="51.12" fill="#7553ff"/><rect x="1832.36" y="1064.00" width="4.50" height="31.78" fill="#3a1873"/><rect x="1832.36" y="1039.59" width="4.50" height="24.41" fill="#f0369a"/><rect x="1838.90" y="1094.37" width="4.50" height="52.53" fill="#7553ff"/><rect x="1838.90" y="1052.83" width="4.50" height="41.54" fill="#3a1873"/><rect x="1838.90" y="1030.37" width="4.50" height="22.45" fill="#f0369a"/><rect x="1845.44" y="1092.20" width="4.50" height="54.70" fill="#7553ff"/><rect x="1845.44" y="1059.88" width="4.50" height="32.32" fill="#3a1873"/><rect x="1845.44" y="1042.85" width="4.50" height="17.03" fill="#f0369a"/><rect x="1851.98" y="1116.06" width="4.50" height="30.84" fill="#7553ff"/><rect x="1851.98" y="1092.74" width="4.50" height="23.32" fill="#3a1873"/><rect x="1851.98" y="1082.98" width="4.50" height="9.76" fill="#f0369a"/><rect x="1858.52" y="1110.64" width="4.50" height="36.26" fill="#7553ff"/><rect x="1858.52" y="1087.86" width="4.50" height="22.78" fill="#3a1873"/><rect x="1858.52" y="1074.63" width="4.50" height="13.23" fill="#f0369a"/><rect x="1865.06" y="1099.03" width="4.50" height="47.87" fill="#7553ff"/><rect x="1865.06" y="1062.91" width="4.50" height="36.12" fill="#3a1873"/><rect x="1865.06" y="1049.90" width="4.50" height="13.02" fill="#f0369a"/><rect x="1871.60" y="1093.83" width="4.50" height="53.07" fill="#7553ff"/><rect x="1871.60" y="1055.86" width="4.50" height="37.97" fill="#3a1873"/><rect x="1871.60" y="1044.26" width="4.50" height="11.61" fill="#f0369a"/><rect x="1878.14" y="1099.25" width="4.50" height="47.65" fill="#7553ff"/><rect x="1878.14" y="1068.55" width="4.50" height="30.70" fill="#3a1873"/><rect x="1878.14" y="1048.27" width="4.50" height="20.28" fill="#f0369a"/><rect x="1884.68" y="1097.62" width="4.50" height="49.28" fill="#7553ff"/><rect x="1884.68" y="1064.54" width="4.50" height="33.08" fill="#3a1873"/><rect x="1884.68" y="1050.44" width="4.50" height="14.10" fill="#f0369a"/><rect x="1891.22" y="1093.83" width="4.50" height="53.07" fill="#7553ff"/><rect x="1891.22" y="1053.69" width="4.50" height="40.13" fill="#3a1873"/><rect x="1891.22" y="1037.21" width="4.50" height="16.49" fill="#f0369a"/><rect x="1897.76" y="1119.32" width="4.50" height="27.58" fill="#7553ff"/><rect x="1897.76" y="1101.96" width="4.50" height="17.36" fill="#3a1873"/><rect x="1897.76" y="1093.07" width="4.50" height="8.89" fill="#f0369a"/><rect x="1904.30" y="1112.27" width="4.50" height="34.63" fill="#7553ff"/><rect x="1904.30" y="1088.95" width="4.50" height="23.32" fill="#3a1873"/><rect x="1904.30" y="1080.81" width="4.50" height="8.14" fill="#f0369a"/><rect x="1910.84" y="1092.20" width="4.50" height="54.70" fill="#7553ff"/><rect x="1910.84" y="1051.52" width="4.50" height="40.68" fill="#3a1873"/><rect x="1910.84" y="1031.13" width="4.50" height="20.39" fill="#f0369a"/><rect x="1917.38" y="1100.88" width="4.50" height="46.02" fill="#7553ff"/><rect x="1917.38" y="1067.79" width="4.50" height="33.08" fill="#3a1873"/><rect x="1917.38" y="1052.07" width="4.50" height="15.73" fill="#f0369a"/><rect x="1923.92" y="1094.91" width="4.50" height="51.99" fill="#7553ff"/><rect x="1923.92" y="1065.84" width="4.50" height="29.07" fill="#3a1873"/><rect x="1923.92" y="1050.44" width="4.50" height="15.40" fill="#f0369a"/><rect x="1930.46" y="1103.05" width="4.50" height="43.85" fill="#7553ff"/><rect x="1930.46" y="1076.80" width="4.50" height="26.25" fill="#3a1873"/><rect x="1930.46" y="1064.54" width="4.50" height="12.26" fill="#f0369a"/><rect x="1937.00" y="1102.51" width="4.50" height="44.39" fill="#7553ff"/><rect x="1937.00" y="1071.59" width="4.50" height="30.91" fill="#3a1873"/><rect x="1937.00" y="1059.98" width="4.50" height="11.61" fill="#f0369a"/><rect x="1943.54" y="1116.93" width="4.50" height="29.97" fill="#7553ff"/><rect x="1943.54" y="1087.86" width="4.50" height="29.07" fill="#3a1873"/><rect x="1943.54" y="1080.05" width="4.50" height="7.81" fill="#f0369a"/><rect x="1950.08" y="1116.06" width="4.50" height="30.84" fill="#7553ff"/><rect x="1950.08" y="1096.87" width="4.50" height="19.20" fill="#3a1873"/><rect x="1950.08" y="1084.82" width="4.50" height="12.04" fill="#f0369a"/><rect x="1956.62" y="1093.83" width="4.50" height="53.07" fill="#7553ff"/><rect x="1956.62" y="1055.86" width="4.50" height="37.97" fill="#3a1873"/><rect x="1956.62" y="1043.39" width="4.50" height="12.47" fill="#f0369a"/><rect x="1963.16" y="1089.16" width="4.50" height="57.74" fill="#7553ff"/><rect x="1963.16" y="1045.78" width="4.50" height="43.39" fill="#3a1873"/><rect x="1963.16" y="1032.76" width="4.50" height="13.02" fill="#f0369a"/><rect x="1969.70" y="1096.00" width="4.50" height="50.90" fill="#7553ff"/><rect x="1969.70" y="1062.91" width="4.50" height="33.08" fill="#3a1873"/><rect x="1969.70" y="1038.18" width="4.50" height="24.73" fill="#f0369a"/><rect x="1976.24" y="1088.40" width="4.50" height="58.50" fill="#7553ff"/><rect x="1976.24" y="1061.61" width="4.50" height="26.79" fill="#3a1873"/><rect x="1976.24" y="1043.61" width="4.50" height="18.01" fill="#f0369a"/><rect x="1982.78" y="1100.01" width="4.50" height="46.89" fill="#7553ff"/><rect x="1982.78" y="1071.59" width="4.50" height="28.42" fill="#3a1873"/><rect x="1982.78" y="1055.32" width="4.50" height="16.27" fill="#f0369a"/><rect x="1989.32" y="1100.88" width="4.50" height="46.02" fill="#7553ff"/><rect x="1989.32" y="1078.64" width="4.50" height="22.24" fill="#3a1873"/><rect x="1989.32" y="1067.04" width="4.50" height="11.61" fill="#f0369a"/><rect x="1995.86" y="1110.86" width="4.50" height="36.04" fill="#7553ff"/><rect x="1995.86" y="1081.90" width="4.50" height="28.96" fill="#3a1873"/><rect x="1995.86" y="1073.76" width="4.50" height="8.14" fill="#f0369a"/><rect x="2002.40" y="1097.62" width="4.50" height="49.28" fill="#7553ff"/><rect x="2002.40" y="1065.84" width="4.50" height="31.78" fill="#3a1873"/><rect x="2002.40" y="1051.31" width="4.50" height="14.54" fill="#f0369a"/><rect x="2008.94" y="1099.79" width="4.50" height="47.11" fill="#7553ff"/><rect x="2008.94" y="1068.66" width="4.50" height="31.13" fill="#3a1873"/><rect x="2008.94" y="1049.03" width="4.50" height="19.63" fill="#f0369a"/><rect x="2015.48" y="1096.00" width="4.50" height="50.90" fill="#7553ff"/><rect x="2015.48" y="1068.55" width="4.50" height="27.44" fill="#3a1873"/><rect x="2015.48" y="1058.25" width="4.50" height="10.30" fill="#f0369a"/><rect x="2022.02" y="1094.37" width="4.50" height="52.53" fill="#7553ff"/><rect x="2022.02" y="1056.95" width="4.50" height="37.42" fill="#3a1873"/><rect x="2022.02" y="1041.22" width="4.50" height="15.73" fill="#f0369a"/><rect x="2028.56" y="1098.38" width="4.50" height="48.52" fill="#7553ff"/><rect x="2028.56" y="1055.32" width="4.50" height="43.06" fill="#3a1873"/><rect x="2028.56" y="1042.09" width="4.50" height="13.23" fill="#f0369a"/><rect x="2035.10" y="1112.27" width="4.50" height="34.63" fill="#7553ff"/><rect x="2035.10" y="1093.83" width="4.50" height="18.44" fill="#3a1873"/><rect x="2035.10" y="1077.01" width="4.50" height="16.81" fill="#f0369a"/><rect x="2041.64" y="1124.74" width="4.50" height="22.16" fill="#7553ff"/><rect x="2041.64" y="1105.76" width="4.50" height="18.98" fill="#3a1873"/><rect x="2041.64" y="1088.40" width="4.50" height="17.36" fill="#f0369a"/><rect x="2048.18" y="1092.96" width="4.50" height="53.94" fill="#7553ff"/><rect x="2048.18" y="1058.36" width="4.50" height="34.60" fill="#3a1873"/><rect x="2048.18" y="1036.66" width="4.50" height="21.69" fill="#f0369a"/><rect x="2054.72" y="1082.98" width="4.50" height="63.92" fill="#7553ff"/><rect x="2054.72" y="1046.86" width="4.50" height="36.12" fill="#3a1873"/><rect x="2054.72" y="1026.25" width="4.50" height="20.61" fill="#f0369a"/><rect x="2061.26" y="1098.49" width="4.50" height="48.41" fill="#7553ff"/><rect x="2061.26" y="1069.10" width="4.50" height="29.40" fill="#3a1873"/><rect x="2061.26" y="1049.14" width="4.50" height="19.96" fill="#f0369a"/><rect x="2067.80" y="1115.52" width="4.50" height="31.38" fill="#7553ff" opacity="0.5"/><rect x="2067.80" y="1094.91" width="4.50" height="20.61" fill="#3a1873" opacity="0.5"/><rect x="2067.80" y="1081.35" width="4.50" height="13.56" fill="#f0369a" opacity="0.5"/><rect x="1478.4" y="1145.90" width="596.20" height="2.2" fill="#5b5666"/><rect x="1502.00" y="1146.90" width="2.2" height="10.10" fill="#5b5666"/><rect x="1706.00" y="1146.90" width="2.2" height="10.10" fill="#5b5666"/><rect x="1908.00" y="1146.90" width="2.2" height="10.10" fill="#5b5666"/></svg><div class="t" style="left:262.6px;width:1200px;text-align:right;top:990.5px;font-size:24px;line-height:24px;font-weight:400;color:#66616f;">1.5K</div><div class="t" style="left:262.6px;width:1200px;text-align:right;top:1019.2px;font-size:24px;line-height:24px;font-weight:400;color:#66616f;">1.2K</div><div class="t" style="left:262.6px;width:1200px;text-align:right;top:1048.3px;font-size:24px;line-height:24px;font-weight:400;color:#66616f;">900</div><div class="t" style="left:262.6px;width:1200px;text-align:right;top:1076.6px;font-size:24px;line-height:24px;font-weight:400;color:#66616f;">600</div><div class="t" style="left:262.6px;width:1200px;text-align:right;top:1106.1px;font-size:24px;line-height:24px;font-weight:400;color:#66616f;">300</div><div class="t" style="left:262.6px;width:1200px;text-align:right;top:1135.2px;font-size:24px;line-height:24px;font-weight:400;color:#66616f;">0</div><div class="t" style="left:903.0px;width:1200px;text-align:center;top:1172.3px;font-size:24px;line-height:24px;font-weight:400;color:#66616f;">5:00 AM</div><div class="t" style="left:1107.0px;width:1200px;text-align:center;top:1172.3px;font-size:24px;line-height:24px;font-weight:400;color:#66616f;">5:00 AM</div><div class="t" style="left:1309.0px;width:1200px;text-align:center;top:1172.3px;font-size:24px;line-height:24px;font-weight:400;color:#66616f;">5:00 AM</div><svg style="position:absolute;left:2248.0px;top:990.0px;" width="612.0" height="175.0" viewBox="2248 990 612 175"><rect x="2255.8" y="1002.00" width="595.00" height="2" fill="#efedf2"/><rect x="2255.8" y="1029.90" width="595.00" height="2" fill="#efedf2"/><rect x="2255.8" y="1059.70" width="595.00" height="2" fill="#efedf2"/><rect x="2255.8" y="1087.70" width="595.00" height="2" fill="#efedf2"/><rect x="2255.8" y="1117.80" width="595.00" height="2" fill="#efedf2"/><rect x="2256.00" y="1135.59" width="4.50" height="11.31" fill="#7553ff"/><rect x="2256.00" y="1124.53" width="4.50" height="11.06" fill="#3a1873"/><rect x="2256.00" y="1120.95" width="4.50" height="3.58" fill="#f0369a"/><rect x="2262.54" y="1118.23" width="4.50" height="28.67" fill="#7553ff"/><rect x="2262.54" y="1103.59" width="4.50" height="14.64" fill="#3a1873"/><rect x="2262.54" y="1083.52" width="4.50" height="20.07" fill="#f0369a"/><rect x="2269.08" y="1111.18" width="4.50" height="35.72" fill="#7553ff"/><rect x="2269.08" y="1096.54" width="4.50" height="14.64" fill="#3a1873"/><rect x="2269.08" y="1077.88" width="4.50" height="18.66" fill="#f0369a"/><rect x="2275.62" y="1093.83" width="4.50" height="53.07" fill="#7553ff"/><rect x="2275.62" y="1069.96" width="4.50" height="23.86" fill="#3a1873"/><rect x="2275.62" y="1037.10" width="4.50" height="32.87" fill="#f0369a"/><rect x="2282.16" y="1084.39" width="4.50" height="62.51" fill="#7553ff"/><rect x="2282.16" y="1060.42" width="4.50" height="23.97" fill="#3a1873"/><rect x="2282.16" y="1036.01" width="4.50" height="24.41" fill="#f0369a"/><rect x="2288.70" y="1100.88" width="4.50" height="46.02" fill="#7553ff"/><rect x="2288.70" y="1071.92" width="4.50" height="28.96" fill="#3a1873"/><rect x="2288.70" y="1038.18" width="4.50" height="33.73" fill="#f0369a"/><rect x="2295.24" y="1098.49" width="4.50" height="48.41" fill="#7553ff"/><rect x="2295.24" y="1071.92" width="4.50" height="26.58" fill="#3a1873"/><rect x="2295.24" y="1046.32" width="4.50" height="25.60" fill="#f0369a"/><rect x="2301.78" y="1083.31" width="4.50" height="63.59" fill="#7553ff"/><rect x="2301.78" y="1058.03" width="4.50" height="25.27" fill="#3a1873"/><rect x="2301.78" y="1027.88" width="4.50" height="30.16" fill="#f0369a"/><rect x="2308.32" y="1103.05" width="4.50" height="43.85" fill="#7553ff"/><rect x="2308.32" y="1086.23" width="4.50" height="16.81" fill="#3a1873"/><rect x="2308.32" y="1065.08" width="4.50" height="21.15" fill="#f0369a"/><rect x="2314.86" y="1114.76" width="4.50" height="32.14" fill="#7553ff"/><rect x="2314.86" y="1096.54" width="4.50" height="18.22" fill="#3a1873"/><rect x="2314.86" y="1074.30" width="4.50" height="22.24" fill="#f0369a"/><rect x="2321.40" y="1098.49" width="4.50" height="48.41" fill="#7553ff"/><rect x="2321.40" y="1058.25" width="4.50" height="40.24" fill="#3a1873"/><rect x="2321.40" y="1031.24" width="4.50" height="27.01" fill="#f0369a"/><rect x="2327.94" y="1097.41" width="4.50" height="49.49" fill="#7553ff"/><rect x="2327.94" y="1071.92" width="4.50" height="25.49" fill="#3a1873"/><rect x="2327.94" y="1046.43" width="4.50" height="25.49" fill="#f0369a"/><rect x="2334.48" y="1091.33" width="4.50" height="55.57" fill="#7553ff"/><rect x="2334.48" y="1077.01" width="4.50" height="14.32" fill="#3a1873"/><rect x="2334.48" y="1046.43" width="4.50" height="30.59" fill="#f0369a"/><rect x="2341.02" y="1104.35" width="4.50" height="42.55" fill="#7553ff"/><rect x="2341.02" y="1075.93" width="4.50" height="28.42" fill="#3a1873"/><rect x="2341.02" y="1061.50" width="4.50" height="14.43" fill="#f0369a"/><rect x="2347.56" y="1104.35" width="4.50" height="42.55" fill="#7553ff"/><rect x="2347.56" y="1077.88" width="4.50" height="26.47" fill="#3a1873"/><rect x="2347.56" y="1047.40" width="4.50" height="30.48" fill="#f0369a"/><rect x="2354.10" y="1106.63" width="4.50" height="40.27" fill="#7553ff"/><rect x="2354.10" y="1086.23" width="4.50" height="20.39" fill="#3a1873"/><rect x="2354.10" y="1064.00" width="4.50" height="22.24" fill="#f0369a"/><rect x="2360.64" y="1108.80" width="4.50" height="38.10" fill="#7553ff"/><rect x="2360.64" y="1096.54" width="4.50" height="12.26" fill="#3a1873"/><rect x="2360.64" y="1079.18" width="4.50" height="17.36" fill="#f0369a"/><rect x="2367.18" y="1085.69" width="4.50" height="61.21" fill="#7553ff"/><rect x="2367.18" y="1059.12" width="4.50" height="26.58" fill="#3a1873"/><rect x="2367.18" y="1027.88" width="4.50" height="31.24" fill="#f0369a"/><rect x="2373.72" y="1090.03" width="4.50" height="56.87" fill="#7553ff"/><rect x="2373.72" y="1060.42" width="4.50" height="29.61" fill="#3a1873"/><rect x="2373.72" y="1027.88" width="4.50" height="32.54" fill="#f0369a"/><rect x="2380.26" y="1101.96" width="4.50" height="44.94" fill="#7553ff"/><rect x="2380.26" y="1071.92" width="4.50" height="30.05" fill="#3a1873"/><rect x="2380.26" y="1041.76" width="4.50" height="30.16" fill="#f0369a"/><rect x="2386.80" y="1073.98" width="4.50" height="72.92" fill="#7553ff"/><rect x="2386.80" y="1040.89" width="4.50" height="33.08" fill="#3a1873"/><rect x="2386.80" y="1022.24" width="4.50" height="18.66" fill="#f0369a"/><rect x="2393.34" y="1093.83" width="4.50" height="53.07" fill="#7553ff"/><rect x="2393.34" y="1075.39" width="4.50" height="18.44" fill="#3a1873"/><rect x="2393.34" y="1049.90" width="4.50" height="25.49" fill="#f0369a"/><rect x="2399.88" y="1116.93" width="4.50" height="29.97" fill="#7553ff"/><rect x="2399.88" y="1102.29" width="4.50" height="14.64" fill="#3a1873"/><rect x="2399.88" y="1084.93" width="4.50" height="17.36" fill="#f0369a"/><rect x="2406.42" y="1116.93" width="4.50" height="29.97" fill="#7553ff"/><rect x="2406.42" y="1095.24" width="4.50" height="21.69" fill="#3a1873"/><rect x="2406.42" y="1077.88" width="4.50" height="17.36" fill="#f0369a"/><rect x="2412.96" y="1091.44" width="4.50" height="55.46" fill="#7553ff"/><rect x="2412.96" y="1065.08" width="4.50" height="26.36" fill="#3a1873"/><rect x="2412.96" y="1037.21" width="4.50" height="27.88" fill="#f0369a"/><rect x="2419.50" y="1105.22" width="4.50" height="41.68" fill="#7553ff"/><rect x="2419.50" y="1080.27" width="4.50" height="24.95" fill="#3a1873"/><rect x="2419.50" y="1044.15" width="4.50" height="36.12" fill="#f0369a"/><rect x="2426.04" y="1078.86" width="4.50" height="68.04" fill="#7553ff"/><rect x="2426.04" y="1056.95" width="4.50" height="21.91" fill="#3a1873"/><rect x="2426.04" y="1030.16" width="4.50" height="26.79" fill="#f0369a"/><rect x="2432.58" y="1090.25" width="4.50" height="56.65" fill="#7553ff"/><rect x="2432.58" y="1065.95" width="4.50" height="24.30" fill="#3a1873"/><rect x="2432.58" y="1024.41" width="4.50" height="41.54" fill="#f0369a"/><rect x="2439.12" y="1098.38" width="4.50" height="48.52" fill="#7553ff"/><rect x="2439.12" y="1068.55" width="4.50" height="29.83" fill="#3a1873"/><rect x="2439.12" y="1045.34" width="4.50" height="23.21" fill="#f0369a"/><rect x="2445.66" y="1113.68" width="4.50" height="33.22" fill="#7553ff"/><rect x="2445.66" y="1087.10" width="4.50" height="26.58" fill="#3a1873"/><rect x="2445.66" y="1075.06" width="4.50" height="12.04" fill="#f0369a"/><rect x="2452.20" y="1122.90" width="4.50" height="24.00" fill="#7553ff"/><rect x="2452.20" y="1105.98" width="4.50" height="16.92" fill="#3a1873"/><rect x="2452.20" y="1087.10" width="4.50" height="18.87" fill="#f0369a"/><rect x="2458.74" y="1083.52" width="4.50" height="63.38" fill="#7553ff"/><rect x="2458.74" y="1047.73" width="4.50" height="35.80" fill="#3a1873"/><rect x="2458.74" y="1011.39" width="4.50" height="36.34" fill="#f0369a"/><rect x="2465.28" y="1098.49" width="4.50" height="48.41" fill="#7553ff"/><rect x="2465.28" y="1062.91" width="4.50" height="35.58" fill="#3a1873"/><rect x="2465.28" y="1031.46" width="4.50" height="31.46" fill="#f0369a"/><rect x="2471.82" y="1094.15" width="4.50" height="52.75" fill="#7553ff"/><rect x="2471.82" y="1066.17" width="4.50" height="27.99" fill="#3a1873"/><rect x="2471.82" y="1034.93" width="4.50" height="31.24" fill="#f0369a"/><rect x="2478.36" y="1092.96" width="4.50" height="53.94" fill="#7553ff"/><rect x="2478.36" y="1060.53" width="4.50" height="32.43" fill="#3a1873"/><rect x="2478.36" y="1026.58" width="4.50" height="33.95" fill="#f0369a"/><rect x="2484.90" y="1085.69" width="4.50" height="61.21" fill="#7553ff"/><rect x="2484.90" y="1058.25" width="4.50" height="27.44" fill="#3a1873"/><rect x="2484.90" y="1025.49" width="4.50" height="32.76" fill="#f0369a"/><rect x="2491.44" y="1109.01" width="4.50" height="37.89" fill="#7553ff"/><rect x="2491.44" y="1091.98" width="4.50" height="17.03" fill="#3a1873"/><rect x="2491.44" y="1072.13" width="4.50" height="19.85" fill="#f0369a"/><rect x="2497.98" y="1110.10" width="4.50" height="36.80" fill="#7553ff"/><rect x="2497.98" y="1096.54" width="4.50" height="13.56" fill="#3a1873"/><rect x="2497.98" y="1083.52" width="4.50" height="13.02" fill="#f0369a"/><rect x="2504.52" y="1094.15" width="4.50" height="52.75" fill="#7553ff"/><rect x="2504.52" y="1060.53" width="4.50" height="33.63" fill="#3a1873"/><rect x="2504.52" y="1041.76" width="4.50" height="18.77" fill="#f0369a"/><rect x="2511.06" y="1091.66" width="4.50" height="55.24" fill="#7553ff"/><rect x="2511.06" y="1056.19" width="4.50" height="35.47" fill="#3a1873"/><rect x="2511.06" y="1026.58" width="4.50" height="29.61" fill="#f0369a"/><rect x="2517.60" y="1091.66" width="4.50" height="55.24" fill="#7553ff"/><rect x="2517.60" y="1061.83" width="4.50" height="29.83" fill="#3a1873"/><rect x="2517.60" y="1029.07" width="4.50" height="32.76" fill="#f0369a"/><rect x="2524.14" y="1084.61" width="4.50" height="62.29" fill="#7553ff"/><rect x="2524.14" y="1052.39" width="4.50" height="32.22" fill="#3a1873"/><rect x="2524.14" y="1038.18" width="4.50" height="14.21" fill="#f0369a"/><rect x="2530.68" y="1092.74" width="4.50" height="54.16" fill="#7553ff"/><rect x="2530.68" y="1045.23" width="4.50" height="47.51" fill="#3a1873"/><rect x="2530.68" y="1025.49" width="4.50" height="19.74" fill="#f0369a"/><rect x="2537.22" y="1122.90" width="4.50" height="24.00" fill="#7553ff"/><rect x="2537.22" y="1111.73" width="4.50" height="11.17" fill="#3a1873"/><rect x="2537.22" y="1095.24" width="4.50" height="16.49" fill="#f0369a"/><rect x="2543.76" y="1112.49" width="4.50" height="34.41" fill="#7553ff"/><rect x="2543.76" y="1093.07" width="4.50" height="19.42" fill="#3a1873"/><rect x="2543.76" y="1086.02" width="4.50" height="7.05" fill="#f0369a"/><rect x="2550.30" y="1081.14" width="4.50" height="65.76" fill="#7553ff"/><rect x="2550.30" y="1058.25" width="4.50" height="22.89" fill="#3a1873"/><rect x="2550.30" y="1026.58" width="4.50" height="31.67" fill="#f0369a"/><rect x="2556.84" y="1104.46" width="4.50" height="42.44" fill="#7553ff"/><rect x="2556.84" y="1077.01" width="4.50" height="27.44" fill="#3a1873"/><rect x="2556.84" y="1047.51" width="4.50" height="29.50" fill="#f0369a"/><rect x="2563.38" y="1085.69" width="4.50" height="61.21" fill="#7553ff"/><rect x="2563.38" y="1056.08" width="4.50" height="29.61" fill="#3a1873"/><rect x="2563.38" y="1022.24" width="4.50" height="33.84" fill="#f0369a"/><rect x="2569.92" y="1090.36" width="4.50" height="56.54" fill="#7553ff"/><rect x="2569.92" y="1062.91" width="4.50" height="27.44" fill="#3a1873"/><rect x="2569.92" y="1033.63" width="4.50" height="29.29" fill="#f0369a"/><rect x="2576.46" y="1096.21" width="4.50" height="50.69" fill="#7553ff"/><rect x="2576.46" y="1067.47" width="4.50" height="28.74" fill="#3a1873"/><rect x="2576.46" y="1047.51" width="4.50" height="19.96" fill="#f0369a"/><rect x="2583.00" y="1114.98" width="4.50" height="31.92" fill="#7553ff"/><rect x="2583.00" y="1096.54" width="4.50" height="18.44" fill="#3a1873"/><rect x="2583.00" y="1077.77" width="4.50" height="18.77" fill="#f0369a"/><rect x="2589.54" y="1118.45" width="4.50" height="28.45" fill="#7553ff"/><rect x="2589.54" y="1103.81" width="4.50" height="14.64" fill="#3a1873"/><rect x="2589.54" y="1090.57" width="4.50" height="13.23" fill="#f0369a"/><rect x="2596.08" y="1104.46" width="4.50" height="42.44" fill="#7553ff"/><rect x="2596.08" y="1071.05" width="4.50" height="33.41" fill="#3a1873"/><rect x="2596.08" y="1046.43" width="4.50" height="24.62" fill="#f0369a"/><rect x="2602.62" y="1139.93" width="4.50" height="6.97" fill="#7553ff"/><rect x="2602.62" y="1136.13" width="4.50" height="3.80" fill="#3a1873"/><rect x="2602.62" y="1129.95" width="4.50" height="6.18" fill="#f0369a"/><rect x="2609.16" y="1101.96" width="4.50" height="44.94" fill="#7553ff"/><rect x="2609.16" y="1071.92" width="4.50" height="30.05" fill="#3a1873"/><rect x="2609.16" y="1037.21" width="4.50" height="34.71" fill="#f0369a"/><rect x="2615.70" y="1083.52" width="4.50" height="63.38" fill="#7553ff"/><rect x="2615.70" y="1056.95" width="4.50" height="26.58" fill="#3a1873"/><rect x="2615.70" y="1029.07" width="4.50" height="27.88" fill="#f0369a"/><rect x="2622.24" y="1090.36" width="4.50" height="56.54" fill="#7553ff"/><rect x="2622.24" y="1054.78" width="4.50" height="35.58" fill="#3a1873"/><rect x="2622.24" y="1017.14" width="4.50" height="37.64" fill="#f0369a"/><rect x="2628.78" y="1107.93" width="4.50" height="38.97" fill="#7553ff"/><rect x="2628.78" y="1091.98" width="4.50" height="15.95" fill="#3a1873"/><rect x="2628.78" y="1073.22" width="4.50" height="18.77" fill="#f0369a"/><rect x="2635.32" y="1119.32" width="4.50" height="27.58" fill="#7553ff"/><rect x="2635.32" y="1096.76" width="4.50" height="22.56" fill="#3a1873"/><rect x="2635.32" y="1077.88" width="4.50" height="18.87" fill="#f0369a"/><rect x="2641.86" y="1077.56" width="4.50" height="69.34" fill="#7553ff"/><rect x="2641.86" y="1050.11" width="4.50" height="27.44" fill="#3a1873"/><rect x="2641.86" y="1022.24" width="4.50" height="27.88" fill="#f0369a"/><rect x="2648.40" y="1094.15" width="4.50" height="52.75" fill="#7553ff"/><rect x="2648.40" y="1067.47" width="4.50" height="26.68" fill="#3a1873"/><rect x="2648.40" y="1032.32" width="4.50" height="35.14" fill="#f0369a"/><rect x="2654.94" y="1083.52" width="4.50" height="63.38" fill="#7553ff"/><rect x="2654.94" y="1052.39" width="4.50" height="31.13" fill="#3a1873"/><rect x="2654.94" y="1026.58" width="4.50" height="25.82" fill="#f0369a"/><rect x="2661.48" y="1104.35" width="4.50" height="42.55" fill="#7553ff"/><rect x="2661.48" y="1087.32" width="4.50" height="17.03" fill="#3a1873"/><rect x="2661.48" y="1071.05" width="4.50" height="16.27" fill="#f0369a"/><rect x="2668.02" y="1097.62" width="4.50" height="49.28" fill="#7553ff"/><rect x="2668.02" y="1062.91" width="4.50" height="34.71" fill="#3a1873"/><rect x="2668.02" y="1030.16" width="4.50" height="32.76" fill="#f0369a"/><rect x="2674.56" y="1117.15" width="4.50" height="29.75" fill="#7553ff"/><rect x="2674.56" y="1107.17" width="4.50" height="9.98" fill="#3a1873"/><rect x="2674.56" y="1086.02" width="4.50" height="21.15" fill="#f0369a"/><rect x="2681.10" y="1107.93" width="4.50" height="38.97" fill="#7553ff"/><rect x="2681.10" y="1094.15" width="4.50" height="13.78" fill="#3a1873"/><rect x="2681.10" y="1077.88" width="4.50" height="16.27" fill="#f0369a"/><rect x="2687.64" y="1085.69" width="4.50" height="61.21" fill="#7553ff"/><rect x="2687.64" y="1061.61" width="4.50" height="24.08" fill="#3a1873"/><rect x="2687.64" y="1046.10" width="4.50" height="15.51" fill="#f0369a"/><rect x="2694.18" y="1111.18" width="4.50" height="35.72" fill="#7553ff"/><rect x="2694.18" y="1086.23" width="4.50" height="24.95" fill="#3a1873"/><rect x="2694.18" y="1058.25" width="4.50" height="27.99" fill="#f0369a"/><rect x="2700.72" y="1103.05" width="4.50" height="43.85" fill="#7553ff"/><rect x="2700.72" y="1071.05" width="4.50" height="32.00" fill="#3a1873"/><rect x="2700.72" y="1040.68" width="4.50" height="30.37" fill="#f0369a"/><rect x="2707.26" y="1086.78" width="4.50" height="60.12" fill="#7553ff"/><rect x="2707.26" y="1056.95" width="4.50" height="29.83" fill="#3a1873"/><rect x="2707.26" y="1033.63" width="4.50" height="23.32" fill="#f0369a"/><rect x="2713.80" y="1098.49" width="4.50" height="48.41" fill="#7553ff"/><rect x="2713.80" y="1077.01" width="4.50" height="21.48" fill="#3a1873"/><rect x="2713.80" y="1052.28" width="4.50" height="24.73" fill="#f0369a"/><rect x="2720.34" y="1121.71" width="4.50" height="25.19" fill="#7553ff"/><rect x="2720.34" y="1108.15" width="4.50" height="13.56" fill="#3a1873"/><rect x="2720.34" y="1090.57" width="4.50" height="17.57" fill="#f0369a"/><rect x="2726.88" y="1120.19" width="4.50" height="26.71" fill="#7553ff"/><rect x="2726.88" y="1099.03" width="4.50" height="21.15" fill="#3a1873"/><rect x="2726.88" y="1083.52" width="4.50" height="15.51" fill="#f0369a"/><rect x="2733.42" y="1101.96" width="4.50" height="44.94" fill="#7553ff"/><rect x="2733.42" y="1075.60" width="4.50" height="26.36" fill="#3a1873"/><rect x="2733.42" y="1047.40" width="4.50" height="28.20" fill="#f0369a"/><rect x="2739.96" y="1091.44" width="4.50" height="55.46" fill="#7553ff"/><rect x="2739.96" y="1067.47" width="4.50" height="23.97" fill="#3a1873"/><rect x="2739.96" y="1040.68" width="4.50" height="26.79" fill="#f0369a"/><rect x="2746.50" y="1098.49" width="4.50" height="48.41" fill="#7553ff"/><rect x="2746.50" y="1077.88" width="4.50" height="20.61" fill="#3a1873"/><rect x="2746.50" y="1052.28" width="4.50" height="25.60" fill="#f0369a"/><rect x="2753.04" y="1098.49" width="4.50" height="48.41" fill="#7553ff"/><rect x="2753.04" y="1075.71" width="4.50" height="22.78" fill="#3a1873"/><rect x="2753.04" y="1051.20" width="4.50" height="24.51" fill="#f0369a"/><rect x="2759.58" y="1094.91" width="4.50" height="51.99" fill="#7553ff"/><rect x="2759.58" y="1054.78" width="4.50" height="40.13" fill="#3a1873"/><rect x="2759.58" y="1020.61" width="4.50" height="34.17" fill="#f0369a"/><rect x="2766.12" y="1103.05" width="4.50" height="43.85" fill="#7553ff"/><rect x="2766.12" y="1088.40" width="4.50" height="14.64" fill="#3a1873"/><rect x="2766.12" y="1064.00" width="4.50" height="24.41" fill="#f0369a"/><rect x="2772.66" y="1119.32" width="4.50" height="27.58" fill="#7553ff"/><rect x="2772.66" y="1101.10" width="4.50" height="18.22" fill="#3a1873"/><rect x="2772.66" y="1086.02" width="4.50" height="15.08" fill="#f0369a"/><rect x="2779.20" y="1101.96" width="4.50" height="44.94" fill="#7553ff"/><rect x="2779.20" y="1086.23" width="4.50" height="15.73" fill="#3a1873"/><rect x="2779.20" y="1054.56" width="4.50" height="31.67" fill="#f0369a"/><rect x="2785.74" y="1092.42" width="4.50" height="54.48" fill="#7553ff"/><rect x="2785.74" y="1075.71" width="4.50" height="16.70" fill="#3a1873"/><rect x="2785.74" y="1053.37" width="4.50" height="22.35" fill="#f0369a"/><rect x="2792.28" y="1085.69" width="4.50" height="61.21" fill="#7553ff"/><rect x="2792.28" y="1061.61" width="4.50" height="24.08" fill="#3a1873"/><rect x="2792.28" y="1045.34" width="4.50" height="16.27" fill="#f0369a"/><rect x="2798.82" y="1104.35" width="4.50" height="42.55" fill="#7553ff"/><rect x="2798.82" y="1086.23" width="4.50" height="18.11" fill="#3a1873"/><rect x="2798.82" y="1059.33" width="4.50" height="26.90" fill="#f0369a"/><rect x="2805.36" y="1099.79" width="4.50" height="47.11" fill="#7553ff"/><rect x="2805.36" y="1077.88" width="4.50" height="21.91" fill="#3a1873"/><rect x="2805.36" y="1056.95" width="4.50" height="20.94" fill="#f0369a"/><rect x="2811.90" y="1120.19" width="4.50" height="26.71" fill="#7553ff"/><rect x="2811.90" y="1102.18" width="4.50" height="18.01" fill="#3a1873"/><rect x="2811.90" y="1088.40" width="4.50" height="13.78" fill="#f0369a"/><rect x="2818.44" y="1114.76" width="4.50" height="32.14" fill="#7553ff"/><rect x="2818.44" y="1104.68" width="4.50" height="10.09" fill="#3a1873"/><rect x="2818.44" y="1083.52" width="4.50" height="21.15" fill="#f0369a"/><rect x="2824.98" y="1096.00" width="4.50" height="50.90" fill="#7553ff"/><rect x="2824.98" y="1071.05" width="4.50" height="24.95" fill="#3a1873"/><rect x="2824.98" y="1055.86" width="4.50" height="15.19" fill="#f0369a"/><rect x="2831.52" y="1096.00" width="4.50" height="50.90" fill="#7553ff"/><rect x="2831.52" y="1077.88" width="4.50" height="18.11" fill="#3a1873"/><rect x="2831.52" y="1058.25" width="4.50" height="19.63" fill="#f0369a"/><rect x="2838.06" y="1101.96" width="4.50" height="44.94" fill="#7553ff"/><rect x="2838.06" y="1068.55" width="4.50" height="33.41" fill="#3a1873"/><rect x="2838.06" y="1045.34" width="4.50" height="23.21" fill="#f0369a"/><rect x="2844.60" y="1111.18" width="4.50" height="35.72" fill="#7553ff" opacity="0.5"/><rect x="2844.60" y="1099.03" width="4.50" height="12.15" fill="#3a1873" opacity="0.5"/><rect x="2844.60" y="1077.88" width="4.50" height="21.15" fill="#f0369a" opacity="0.5"/><rect x="2255.8" y="1145.90" width="595.00" height="2.2" fill="#5b5666"/><rect x="2278.20" y="1146.90" width="2.2" height="10.10" fill="#5b5666"/><rect x="2481.50" y="1146.90" width="2.2" height="10.10" fill="#5b5666"/><rect x="2683.60" y="1146.90" width="2.2" height="10.10" fill="#5b5666"/></svg><div class="t" style="left:1038.8px;width:1200px;text-align:right;top:990.5px;font-size:24px;line-height:24px;font-weight:400;color:#66616f;">1K</div><div class="t" style="left:1038.8px;width:1200px;text-align:right;top:1019.2px;font-size:24px;line-height:24px;font-weight:400;color:#66616f;">800</div><div class="t" style="left:1038.8px;width:1200px;text-align:right;top:1048.3px;font-size:24px;line-height:24px;font-weight:400;color:#66616f;">600</div><div class="t" style="left:1038.8px;width:1200px;text-align:right;top:1076.6px;font-size:24px;line-height:24px;font-weight:400;color:#66616f;">400</div><div class="t" style="left:1038.8px;width:1200px;text-align:right;top:1106.1px;font-size:24px;line-height:24px;font-weight:400;color:#66616f;">200</div><div class="t" style="left:1038.8px;width:1200px;text-align:right;top:1135.2px;font-size:24px;line-height:24px;font-weight:400;color:#66616f;">0</div><div class="t" style="left:1679.2px;width:1200px;text-align:center;top:1172.3px;font-size:24px;line-height:24px;font-weight:400;color:#66616f;">5:00 AM</div><div class="t" style="left:1882.5px;width:1200px;text-align:center;top:1172.3px;font-size:24px;line-height:24px;font-weight:400;color:#66616f;">5:00 AM</div><div class="t" style="left:2084.6px;width:1200px;text-align:center;top:1172.3px;font-size:24px;line-height:24px;font-weight:400;color:#66616f;">5:00 AM</div></div>
</body></html>
